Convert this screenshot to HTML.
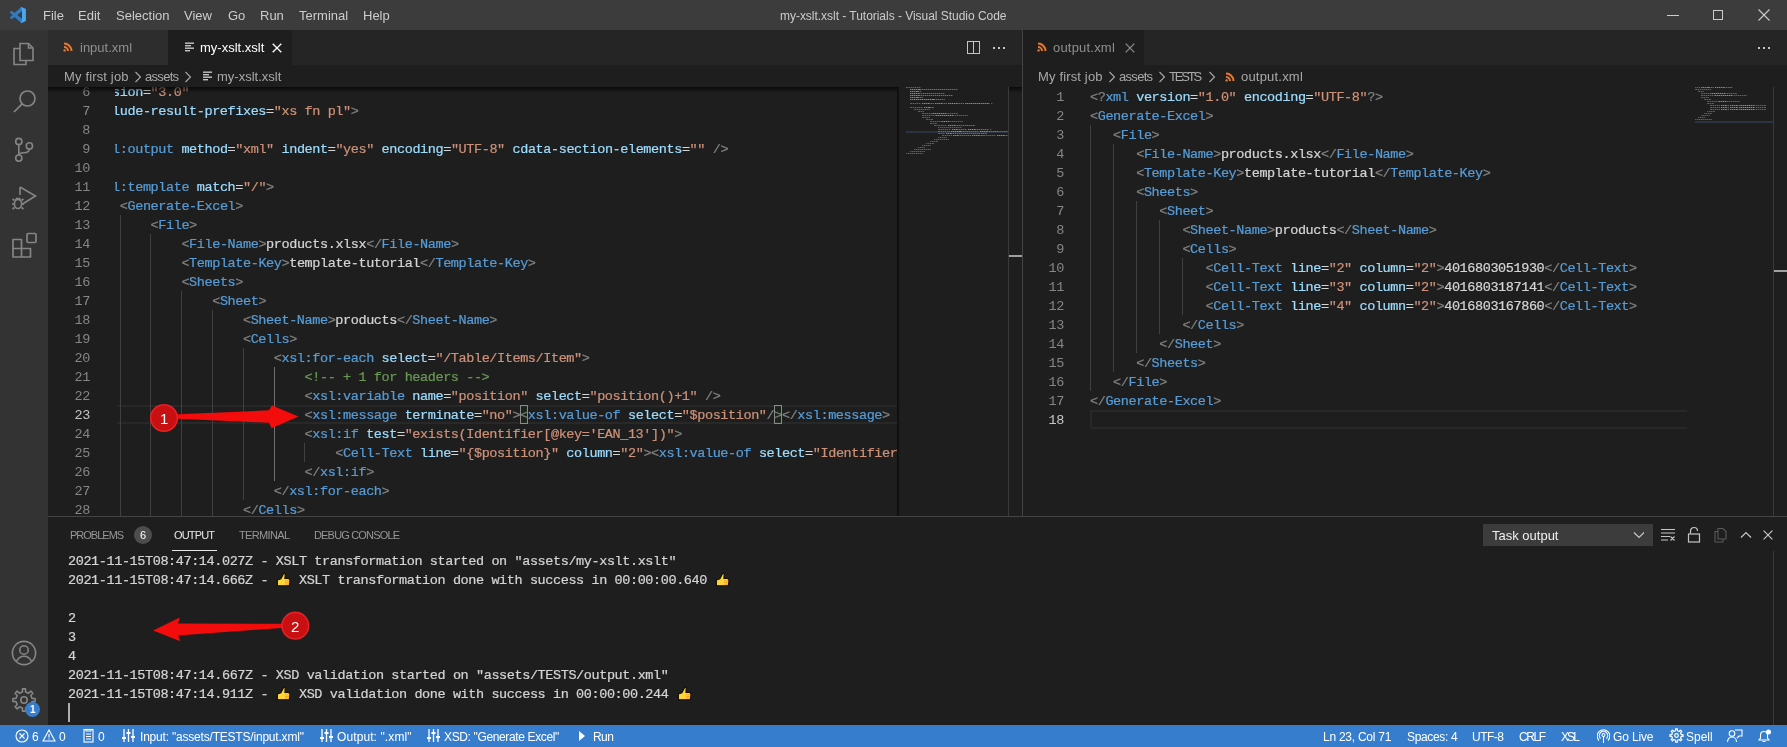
<!DOCTYPE html><html><head><meta charset="utf-8"><style>
*{margin:0;padding:0;box-sizing:border-box}
html,body{width:1787px;height:747px;overflow:hidden;background:#1e1e1e}
body{position:relative;font-family:"Liberation Sans",sans-serif;font-size:13px;color:#cccccc}
.a{position:absolute}
.ui{position:absolute;white-space:pre;font-family:"Liberation Sans",sans-serif;line-height:1}
.cl{position:absolute;height:19px;line-height:19px;white-space:pre;font-family:"Liberation Mono",monospace;font-size:13.5px;letter-spacing:-0.403px}
.ln{position:absolute;height:19px;line-height:19px;text-align:right;font-family:"Liberation Mono",monospace;font-size:13.5px;letter-spacing:-0.403px;color:#858585}
.ln.act{color:#c6c6c6}
.g{position:absolute;width:1px;background:#404040}
.ga{background:#707070}
.cl,.ln,.ol,.ui{will-change:transform}
.cl,.ol{-webkit-text-stroke:0.22px}
.ol{position:absolute;left:68px;height:19px;line-height:19px;white-space:pre;font-family:"Liberation Mono",monospace;font-size:13.5px;letter-spacing:-0.403px;color:#d4d4d4}
</style></head><body>
<div class="a" style="left:0;top:0;width:1787px;height:30px;background:#3c3c3c"></div>
<svg class="a" style="left:10px;top:7px" width="16" height="16" viewBox="0 0 100 100"><path d="M68.3 97.9 28.9 62 11.8 75c-1.6 1.2-3.8 1.1-5.3-.2l-5.5-5c-1.8-1.7-1.8-4.5 0-6.2L15.8 50 1 36.5c-1.8-1.7-1.8-4.5 0-6.2l5.5-5c1.5-1.3 3.7-1.4 5.3-.2L28.9 38 68.3 2.1 75 27.3 45.1 50 75 72.7z" fill="#2d7cc4"/><path d="M68.3 2.1c1.9-1.9 4.7-2.4 7.1-1.2L96 10.8c2.1 1 3.5 3.2 3.5 5.6v67.2c0 2.4-1.3 4.6-3.5 5.6L75.4 99.1c-2.4 1.2-5.2.7-7.1-1.2L75 72.7V27.3z" fill="#4aa6ef"/></svg>
<div class="ui" style="left:43px;top:9px;font-size:13px;color:#cccccc">File</div>
<div class="ui" style="left:78px;top:9px;font-size:13px;color:#cccccc">Edit</div>
<div class="ui" style="left:116px;top:9px;font-size:13px;color:#cccccc">Selection</div>
<div class="ui" style="left:184px;top:9px;font-size:13px;color:#cccccc">View</div>
<div class="ui" style="left:228px;top:9px;font-size:13px;color:#cccccc">Go</div>
<div class="ui" style="left:260px;top:9px;font-size:13px;color:#cccccc">Run</div>
<div class="ui" style="left:299px;top:9px;font-size:13px;color:#cccccc">Terminal</div>
<div class="ui" style="left:363px;top:9px;font-size:13px;color:#cccccc">Help</div>
<div class="ui" style="left:780px;top:10px;font-size:12px;color:#cccccc;letter-spacing:-0.03px">my-xslt.xslt - Tutorials - Visual Studio Code</div>
<div class="a" style="left:1667px;top:15px;width:12px;height:1px;background:#cccccc"></div>
<div class="a" style="left:1713px;top:10px;width:10px;height:10px;border:1px solid #cccccc"></div>
<svg class="a" style="left:1758px;top:9px" width="12" height="12" viewBox="0 0 12 12"><path d="M0.5 0.5 11.5 11.5M11.5 0.5 0.5 11.5" stroke="#cccccc" stroke-width="1.1"/></svg>
<div class="a" style="left:0;top:30px;width:48px;height:695px;background:#333333"></div>
<svg class="a" style="left:12px;top:41px" width="24" height="26" viewBox="0 0 24 26" fill="none" stroke="#858585" stroke-width="1.6">
<path d="M8 2.5h8.5l4.5 4.5v12.5H8z"/><path d="M16.5 2.5v4.5H21"/><path d="M8 7.5H2v16h12v-4"/></svg>
<svg class="a" style="left:12px;top:88px" width="26" height="26" viewBox="0 0 26 26" fill="none" stroke="#858585" stroke-width="1.7"><circle cx="15.5" cy="10.5" r="7.5"/><path d="M10.2 15.8 2 24"/></svg>
<svg class="a" style="left:12px;top:135px" width="24" height="28" viewBox="0 0 24 28" fill="none" stroke="#858585" stroke-width="1.6"><circle cx="6.8" cy="6.5" r="3.1"/><circle cx="6.8" cy="23.1" r="3.1"/><circle cx="17.4" cy="10.9" r="3.1"/><path d="M6.8 9.6v10.4M17.4 14c0 3-2.5 3.6-5.5 3.8-3 .2-5.1.6-5.1 2.2"/></svg>
<svg class="a" style="left:10px;top:185px" width="28" height="26" viewBox="0 0 28 26" fill="none" stroke="#858585" stroke-width="1.6"><path d="M10 2 25.5 11 12.5 19"/><path d="M10 2v8"/><ellipse cx="8" cy="19" rx="3.6" ry="4.5"/><path d="M4.5 15.5 2.5 14M11.5 15.5l2-1.5M4.4 19H2M11.6 19H14M4.5 22.5l-2 1.5M11.5 22.5l2 1.5M5.5 15.5l1-2h3l1 2"/></svg>
<svg class="a" style="left:11px;top:232px" width="26" height="26" viewBox="0 0 26 26" fill="none" stroke="#858585" stroke-width="1.7" stroke-linejoin="round"><path d="M2 7.5h8.5v9h9v8.5H2z"/><path d="M2 16.5h8.5V25"/><rect x="16" y="1.5" width="9" height="9" rx="1.2"/></svg>
<svg class="a" style="left:11px;top:640px" width="26" height="26" viewBox="0 0 26 26" fill="none" stroke="#858585" stroke-width="1.6"><circle cx="13" cy="13" r="11.6"/><circle cx="13" cy="10" r="4.3"/><path d="M5.5 21.5c1.5-3.5 4.3-5.2 7.5-5.2s6 1.7 7.5 5.2"/></svg>
<svg class="a" style="left:11px;top:687px" width="26" height="26" viewBox="0 0 26 26" fill="none" stroke="#858585" stroke-width="1.6" stroke-linejoin="round"><path d="M21.04 11.40 L24.09 11.47 L24.09 14.53 L21.04 14.60 L19.82 17.56 L21.93 19.76 L19.76 21.93 L17.56 19.82 L14.60 21.04 L14.53 24.09 L11.47 24.09 L11.40 21.04 L8.44 19.82 L6.24 21.93 L4.07 19.76 L6.18 17.56 L4.96 14.60 L1.91 14.53 L1.91 11.47 L4.96 11.40 L6.18 8.44 L4.07 6.24 L6.24 4.07 L8.44 6.18 L11.40 4.96 L11.47 1.91 L14.53 1.91 L14.60 4.96 L17.56 6.18 L19.76 4.07 L21.93 6.24 L19.82 8.44Z"/><circle cx="13" cy="13" r="3.2"/></svg>
<div class="a" style="left:25px;top:702px;width:15px;height:15px;border-radius:50%;background:#367ecd"></div>
<div class="ui" style="left:29.5px;top:704.5px;font-size:10px;color:#fff;font-weight:bold">1</div>
<div class="a" style="left:48px;top:30px;width:974px;height:35px;background:#252526"></div>
<div class="a" style="left:48px;top:30px;width:120px;height:35px;background:#2d2d2d"></div>
<div class="a" style="left:168px;top:30px;width:124px;height:35px;background:#1e1e1e"></div>
<svg class="a" style="left:63px;top:42px" width="10" height="10" viewBox="0 0 10 10" fill="none" stroke="#e37933" stroke-width="2"><path d="M1 1.5a7.5 7.5 0 0 1 7.5 7.5"/><path d="M1 5a4 4 0 0 1 4 4"/><circle cx="1.6" cy="8.4" r="1.2" fill="#e37933" stroke="none"/></svg>
<div class="ui" style="left:80px;top:41px;font-size:13px;color:#8f8f8f">input.xml</div>
<svg class="a" style="left:185px;top:42px" width="10" height="10" viewBox="0 0 10 10" fill="#c5c5c5"><rect x="0" y="0.5" width="9" height="1.4"/><rect x="0" y="3" width="6" height="1.4"/><rect x="0" y="5.5" width="9" height="1.4"/><rect x="0" y="8" width="5" height="1.4"/></svg>
<div class="ui" style="left:200px;top:41px;font-size:13px;color:#ffffff">my-xslt.xslt</div>
<svg class="a" style="left:272px;top:43px" width="10" height="10" viewBox="0 0 10 10"><path d="M0.7 0.7 9.3 9.3M9.3 0.7 0.7 9.3" stroke="#ffffff" stroke-width="1.3"/></svg>
<div class="a" style="left:967px;top:41px;width:13px;height:13px;border:1px solid #c5c5c5"></div><div class="a" style="left:973px;top:41px;width:1px;height:13px;background:#c5c5c5"></div>
<div class="a" style="left:993px;top:47px;width:2px;height:2px;background:#c5c5c5"></div>
<div class="a" style="left:998px;top:47px;width:2px;height:2px;background:#c5c5c5"></div>
<div class="a" style="left:1003px;top:47px;width:2px;height:2px;background:#c5c5c5"></div>
<div class="a" style="left:48px;top:65px;width:974px;height:22px;background:#1e1e1e"></div>
<div class="ui" style="left:64px;top:70px;font-size:13px;color:#a9a9a9;letter-spacing:0.15px">My first job</div>
<svg class="a" style="left:134px;top:71px" width="8" height="12" viewBox="0 0 8 12"><path d="M1.5 1 6.5 6 1.5 11" fill="none" stroke="#a9a9a9" stroke-width="1.1"/></svg>
<div class="ui" style="left:145px;top:70px;font-size:13px;color:#a9a9a9;letter-spacing:-0.7px">assets</div>
<svg class="a" style="left:184px;top:71px" width="8" height="12" viewBox="0 0 8 12"><path d="M1.5 1 6.5 6 1.5 11" fill="none" stroke="#a9a9a9" stroke-width="1.1"/></svg>
<svg class="a" style="left:203px;top:71px" width="10" height="10" viewBox="0 0 10 10" fill="#c5c5c5"><rect x="0" y="0.5" width="9" height="1.4"/><rect x="0" y="3" width="6" height="1.4"/><rect x="0" y="5.5" width="9" height="1.4"/><rect x="0" y="8" width="5" height="1.4"/></svg>
<div class="ui" style="left:217px;top:70px;font-size:13px;color:#a9a9a9">my-xslt.xslt</div>
<div class="a" style="left:48px;top:87px;width:974px;height:429px;background:#1e1e1e"></div>
<div class="ln" style="top:83px;left:48px;width:42px">6</div><div class="ln" style="top:102px;left:48px;width:42px">7</div><div class="ln" style="top:121px;left:48px;width:42px">8</div><div class="ln" style="top:140px;left:48px;width:42px">9</div><div class="ln" style="top:159px;left:48px;width:42px">10</div><div class="ln" style="top:178px;left:48px;width:42px">11</div><div class="ln" style="top:197px;left:48px;width:42px">12</div><div class="ln" style="top:216px;left:48px;width:42px">13</div><div class="ln" style="top:235px;left:48px;width:42px">14</div><div class="ln" style="top:254px;left:48px;width:42px">15</div><div class="ln" style="top:273px;left:48px;width:42px">16</div><div class="ln" style="top:292px;left:48px;width:42px">17</div><div class="ln" style="top:311px;left:48px;width:42px">18</div><div class="ln" style="top:330px;left:48px;width:42px">19</div><div class="ln" style="top:349px;left:48px;width:42px">20</div><div class="ln" style="top:368px;left:48px;width:42px">21</div><div class="ln" style="top:387px;left:48px;width:42px">22</div><div class="ln act" style="top:406px;left:48px;width:42px">23</div><div class="ln" style="top:425px;left:48px;width:42px">24</div><div class="ln" style="top:444px;left:48px;width:42px">25</div><div class="ln" style="top:463px;left:48px;width:42px">26</div><div class="ln" style="top:482px;left:48px;width:42px">27</div><div class="ln" style="top:501px;left:48px;width:42px">28</div><div class="ln" style="top:520px;left:48px;width:42px">29</div>
<div class="a" style="left:117px;top:405px;width:780px;height:19px;border-top:2px solid #282828;border-bottom:2px solid #282828"></div>
<div class="a" style="left:115px;top:87px;width:782px;height:429px;overflow:hidden"><div class="g" style="left:5px;top:128px;height:323px"></div><div class="g" style="left:35px;top:147px;height:304px"></div><div class="g" style="left:66px;top:204px;height:247px"></div><div class="g" style="left:97px;top:223px;height:228px"></div><div class="g" style="left:128px;top:261px;height:152px"></div><div class="g ga" style="left:159px;top:280px;height:114px"></div><div class="g" style="left:189px;top:356px;height:19px"></div><div class="cl" style="top:-4px;left:-26.50px"><span style="color:#9cdcfe">version</span><span style="color:#d4d4d4">=</span><span style="color:#ce9178">&quot;3.0&quot;</span></div><div class="cl" style="top:15px;left:-26.50px"><span style="color:#9cdcfe">exclude-result-prefixes</span><span style="color:#d4d4d4">=</span><span style="color:#ce9178">&quot;xs fn pl&quot;</span><span style="color:#808080">&gt;</span></div><div class="cl" style="top:34px;left:-26.50px"></div><div class="cl" style="top:53px;left:-26.50px"><span style="color:#808080">&lt;</span><span style="color:#569cd6">xsl:output</span><span style="color:#d4d4d4"> </span><span style="color:#9cdcfe">method</span><span style="color:#d4d4d4">=</span><span style="color:#ce9178">&quot;xml&quot;</span><span style="color:#d4d4d4"> </span><span style="color:#9cdcfe">indent</span><span style="color:#d4d4d4">=</span><span style="color:#ce9178">&quot;yes&quot;</span><span style="color:#d4d4d4"> </span><span style="color:#9cdcfe">encoding</span><span style="color:#d4d4d4">=</span><span style="color:#ce9178">&quot;UTF-8&quot;</span><span style="color:#d4d4d4"> </span><span style="color:#9cdcfe">cdata-section-elements</span><span style="color:#d4d4d4">=</span><span style="color:#ce9178">&quot;&quot;</span><span style="color:#d4d4d4"> </span><span style="color:#808080">/&gt;</span></div><div class="cl" style="top:72px;left:-26.50px"></div><div class="cl" style="top:91px;left:-26.50px"><span style="color:#808080">&lt;</span><span style="color:#569cd6">xsl:template</span><span style="color:#d4d4d4"> </span><span style="color:#9cdcfe">match</span><span style="color:#d4d4d4">=</span><span style="color:#ce9178">&quot;/&quot;</span><span style="color:#808080">&gt;</span></div><div class="cl" style="top:110px;left:-26.50px"><span style="color:#d4d4d4">    </span><span style="color:#808080">&lt;</span><span style="color:#569cd6">Generate-Excel</span><span style="color:#808080">&gt;</span></div><div class="cl" style="top:129px;left:-26.50px"><span style="color:#d4d4d4">        </span><span style="color:#808080">&lt;</span><span style="color:#569cd6">File</span><span style="color:#808080">&gt;</span></div><div class="cl" style="top:148px;left:-26.50px"><span style="color:#d4d4d4">            </span><span style="color:#808080">&lt;</span><span style="color:#569cd6">File-Name</span><span style="color:#808080">&gt;</span><span style="color:#d4d4d4">products.xlsx</span><span style="color:#808080">&lt;/</span><span style="color:#569cd6">File-Name</span><span style="color:#808080">&gt;</span></div><div class="cl" style="top:167px;left:-26.50px"><span style="color:#d4d4d4">            </span><span style="color:#808080">&lt;</span><span style="color:#569cd6">Template-Key</span><span style="color:#808080">&gt;</span><span style="color:#d4d4d4">template-tutorial</span><span style="color:#808080">&lt;/</span><span style="color:#569cd6">Template-Key</span><span style="color:#808080">&gt;</span></div><div class="cl" style="top:186px;left:-26.50px"><span style="color:#d4d4d4">            </span><span style="color:#808080">&lt;</span><span style="color:#569cd6">Sheets</span><span style="color:#808080">&gt;</span></div><div class="cl" style="top:205px;left:-26.50px"><span style="color:#d4d4d4">                </span><span style="color:#808080">&lt;</span><span style="color:#569cd6">Sheet</span><span style="color:#808080">&gt;</span></div><div class="cl" style="top:224px;left:-26.50px"><span style="color:#d4d4d4">                    </span><span style="color:#808080">&lt;</span><span style="color:#569cd6">Sheet-Name</span><span style="color:#808080">&gt;</span><span style="color:#d4d4d4">products</span><span style="color:#808080">&lt;/</span><span style="color:#569cd6">Sheet-Name</span><span style="color:#808080">&gt;</span></div><div class="cl" style="top:243px;left:-26.50px"><span style="color:#d4d4d4">                    </span><span style="color:#808080">&lt;</span><span style="color:#569cd6">Cells</span><span style="color:#808080">&gt;</span></div><div class="cl" style="top:262px;left:-26.50px"><span style="color:#d4d4d4">                        </span><span style="color:#808080">&lt;</span><span style="color:#569cd6">xsl:for-each</span><span style="color:#d4d4d4"> </span><span style="color:#9cdcfe">select</span><span style="color:#d4d4d4">=</span><span style="color:#ce9178">&quot;/Table/Items/Item&quot;</span><span style="color:#808080">&gt;</span></div><div class="cl" style="top:281px;left:-26.50px"><span style="color:#d4d4d4">                            </span><span style="color:#6a9955">&lt;!-- + 1 for headers --&gt;</span></div><div class="cl" style="top:300px;left:-26.50px"><span style="color:#d4d4d4">                            </span><span style="color:#808080">&lt;</span><span style="color:#569cd6">xsl:variable</span><span style="color:#d4d4d4"> </span><span style="color:#9cdcfe">name</span><span style="color:#d4d4d4">=</span><span style="color:#ce9178">&quot;position&quot;</span><span style="color:#d4d4d4"> </span><span style="color:#9cdcfe">select</span><span style="color:#d4d4d4">=</span><span style="color:#ce9178">&quot;position()+1&quot;</span><span style="color:#d4d4d4"> </span><span style="color:#808080">/&gt;</span></div><div class="cl" style="top:319px;left:-26.50px"><span style="color:#d4d4d4">                            </span><span style="color:#808080">&lt;</span><span style="color:#569cd6">xsl:message</span><span style="color:#d4d4d4"> </span><span style="color:#9cdcfe">terminate</span><span style="color:#d4d4d4">=</span><span style="color:#ce9178">&quot;no&quot;</span><span style="color:#808080">&gt;</span><span style="color:#808080">&lt;</span><span style="color:#569cd6">xsl:value-of</span><span style="color:#d4d4d4"> </span><span style="color:#9cdcfe">select</span><span style="color:#d4d4d4">=</span><span style="color:#ce9178">&quot;$position&quot;</span><span style="color:#808080">/&gt;</span><span style="color:#808080">&lt;/</span><span style="color:#569cd6">xsl:message</span><span style="color:#808080">&gt;</span></div><div class="cl" style="top:338px;left:-26.50px"><span style="color:#d4d4d4">                            </span><span style="color:#808080">&lt;</span><span style="color:#569cd6">xsl:if</span><span style="color:#d4d4d4"> </span><span style="color:#9cdcfe">test</span><span style="color:#d4d4d4">=</span><span style="color:#ce9178">&quot;exists(Identifier[@key=&#x27;EAN_13&#x27;])&quot;</span><span style="color:#808080">&gt;</span></div><div class="cl" style="top:357px;left:-26.50px"><span style="color:#d4d4d4">                                </span><span style="color:#808080">&lt;</span><span style="color:#569cd6">Cell-Text</span><span style="color:#d4d4d4"> </span><span style="color:#9cdcfe">line</span><span style="color:#d4d4d4">=</span><span style="color:#ce9178">&quot;{$position}&quot;</span><span style="color:#d4d4d4"> </span><span style="color:#9cdcfe">column</span><span style="color:#d4d4d4">=</span><span style="color:#ce9178">&quot;2&quot;</span><span style="color:#808080">&gt;</span><span style="color:#808080">&lt;</span><span style="color:#569cd6">xsl:value-of</span><span style="color:#d4d4d4"> </span><span style="color:#9cdcfe">select</span><span style="color:#d4d4d4">=</span><span style="color:#ce9178">&quot;Identifier[@key=&#x27;EAN_13&#x27;]&quot;</span><span style="color:#808080">/&gt;</span><span style="color:#808080">&lt;/</span><span style="color:#569cd6">Cell-Text</span><span style="color:#808080">&gt;</span></div><div class="cl" style="top:376px;left:-26.50px"><span style="color:#d4d4d4">                            </span><span style="color:#808080">&lt;/</span><span style="color:#569cd6">xsl:if</span><span style="color:#808080">&gt;</span></div><div class="cl" style="top:395px;left:-26.50px"><span style="color:#d4d4d4">                        </span><span style="color:#808080">&lt;/</span><span style="color:#569cd6">xsl:for-each</span><span style="color:#808080">&gt;</span></div><div class="cl" style="top:414px;left:-26.50px"><span style="color:#d4d4d4">                    </span><span style="color:#808080">&lt;/</span><span style="color:#569cd6">Cells</span><span style="color:#808080">&gt;</span></div><div class="cl" style="top:433px;left:-26.50px"><span style="color:#d4d4d4">                </span><span style="color:#808080">&lt;/</span><span style="color:#569cd6">Sheet</span><span style="color:#808080">&gt;</span></div>
<div class="a" style="left:405px;top:318px;width:8px;height:19px;border:1px solid #8a8a8a;background:rgba(0,100,0,.1)"></div>
<div class="a" style="left:659px;top:318px;width:8px;height:19px;border:1px solid #8a8a8a;background:rgba(0,100,0,.1)"></div>
</div>
<div class="a" style="left:48px;top:87px;width:974px;height:6px;background:linear-gradient(#000000aa,#00000000)"></div>
<div class="a" style="left:897px;top:87px;width:111px;height:429px;overflow:hidden;background:#1e1e1e">
<div style="position:absolute;left:9px;top:0px;width:1px;height:2px;background:linear-gradient(#808080 0 1px,transparent 1px);opacity:.6;-webkit-mask-image:repeating-linear-gradient(90deg,#000 0 1px,rgba(0,0,0,.45) 1px 2px)"></div><div style="position:absolute;left:10px;top:0px;width:14px;height:2px;background:linear-gradient(#569cd6 0 1px,transparent 1px);opacity:.6;-webkit-mask-image:repeating-linear-gradient(90deg,#000 0 1px,rgba(0,0,0,.45) 1px 2px)"></div><div style="position:absolute;left:13px;top:2px;width:9px;height:2px;background:linear-gradient(#9cdcfe 0 1px,transparent 1px);opacity:.6;-webkit-mask-image:repeating-linear-gradient(90deg,#000 0 1px,rgba(0,0,0,.45) 1px 2px)"></div><div style="position:absolute;left:22px;top:2px;width:1px;height:2px;background:linear-gradient(#d4d4d4 0 1px,transparent 1px);opacity:.6;-webkit-mask-image:repeating-linear-gradient(90deg,#000 0 1px,rgba(0,0,0,.45) 1px 2px)"></div><div style="position:absolute;left:23px;top:2px;width:38px;height:2px;background:linear-gradient(#ce9178 0 1px,transparent 1px);opacity:.6;-webkit-mask-image:repeating-linear-gradient(90deg,#000 0 1px,rgba(0,0,0,.45) 1px 2px)"></div><div style="position:absolute;left:13px;top:4px;width:7px;height:2px;background:linear-gradient(#9cdcfe 0 1px,transparent 1px);opacity:.6;-webkit-mask-image:repeating-linear-gradient(90deg,#000 0 1px,rgba(0,0,0,.45) 1px 2px)"></div><div style="position:absolute;left:20px;top:4px;width:1px;height:2px;background:linear-gradient(#d4d4d4 0 1px,transparent 1px);opacity:.6;-webkit-mask-image:repeating-linear-gradient(90deg,#000 0 1px,rgba(0,0,0,.45) 1px 2px)"></div><div style="position:absolute;left:21px;top:4px;width:3px;height:2px;background:linear-gradient(#ce9178 0 1px,transparent 1px);opacity:.6;-webkit-mask-image:repeating-linear-gradient(90deg,#000 0 1px,rgba(0,0,0,.45) 1px 2px)"></div><div style="position:absolute;left:13px;top:6px;width:8px;height:2px;background:linear-gradient(#9cdcfe 0 1px,transparent 1px);opacity:.6;-webkit-mask-image:repeating-linear-gradient(90deg,#000 0 1px,rgba(0,0,0,.45) 1px 2px)"></div><div style="position:absolute;left:21px;top:6px;width:1px;height:2px;background:linear-gradient(#d4d4d4 0 1px,transparent 1px);opacity:.6;-webkit-mask-image:repeating-linear-gradient(90deg,#000 0 1px,rgba(0,0,0,.45) 1px 2px)"></div><div style="position:absolute;left:22px;top:6px;width:26px;height:2px;background:linear-gradient(#ce9178 0 1px,transparent 1px);opacity:.6;-webkit-mask-image:repeating-linear-gradient(90deg,#000 0 1px,rgba(0,0,0,.45) 1px 2px)"></div><div style="position:absolute;left:13px;top:8px;width:8px;height:2px;background:linear-gradient(#9cdcfe 0 1px,transparent 1px);opacity:.6;-webkit-mask-image:repeating-linear-gradient(90deg,#000 0 1px,rgba(0,0,0,.45) 1px 2px)"></div><div style="position:absolute;left:21px;top:8px;width:1px;height:2px;background:linear-gradient(#d4d4d4 0 1px,transparent 1px);opacity:.6;-webkit-mask-image:repeating-linear-gradient(90deg,#000 0 1px,rgba(0,0,0,.45) 1px 2px)"></div><div style="position:absolute;left:22px;top:8px;width:34px;height:2px;background:linear-gradient(#ce9178 0 1px,transparent 1px);opacity:.6;-webkit-mask-image:repeating-linear-gradient(90deg,#000 0 1px,rgba(0,0,0,.45) 1px 2px)"></div><div style="position:absolute;left:13px;top:10px;width:7px;height:2px;background:linear-gradient(#9cdcfe 0 1px,transparent 1px);opacity:.6;-webkit-mask-image:repeating-linear-gradient(90deg,#000 0 1px,rgba(0,0,0,.45) 1px 2px)"></div><div style="position:absolute;left:20px;top:10px;width:1px;height:2px;background:linear-gradient(#d4d4d4 0 1px,transparent 1px);opacity:.6;-webkit-mask-image:repeating-linear-gradient(90deg,#000 0 1px,rgba(0,0,0,.45) 1px 2px)"></div><div style="position:absolute;left:21px;top:10px;width:5px;height:2px;background:linear-gradient(#ce9178 0 1px,transparent 1px);opacity:.6;-webkit-mask-image:repeating-linear-gradient(90deg,#000 0 1px,rgba(0,0,0,.45) 1px 2px)"></div><div style="position:absolute;left:13px;top:12px;width:23px;height:2px;background:linear-gradient(#9cdcfe 0 1px,transparent 1px);opacity:.6;-webkit-mask-image:repeating-linear-gradient(90deg,#000 0 1px,rgba(0,0,0,.45) 1px 2px)"></div><div style="position:absolute;left:36px;top:12px;width:1px;height:2px;background:linear-gradient(#d4d4d4 0 1px,transparent 1px);opacity:.6;-webkit-mask-image:repeating-linear-gradient(90deg,#000 0 1px,rgba(0,0,0,.45) 1px 2px)"></div><div style="position:absolute;left:37px;top:12px;width:10px;height:2px;background:linear-gradient(#ce9178 0 1px,transparent 1px);opacity:.6;-webkit-mask-image:repeating-linear-gradient(90deg,#000 0 1px,rgba(0,0,0,.45) 1px 2px)"></div><div style="position:absolute;left:47px;top:12px;width:1px;height:2px;background:linear-gradient(#808080 0 1px,transparent 1px);opacity:.6;-webkit-mask-image:repeating-linear-gradient(90deg,#000 0 1px,rgba(0,0,0,.45) 1px 2px)"></div><div style="position:absolute;left:13px;top:16px;width:1px;height:2px;background:linear-gradient(#808080 0 1px,transparent 1px);opacity:.6;-webkit-mask-image:repeating-linear-gradient(90deg,#000 0 1px,rgba(0,0,0,.45) 1px 2px)"></div><div style="position:absolute;left:14px;top:16px;width:10px;height:2px;background:linear-gradient(#569cd6 0 1px,transparent 1px);opacity:.6;-webkit-mask-image:repeating-linear-gradient(90deg,#000 0 1px,rgba(0,0,0,.45) 1px 2px)"></div><div style="position:absolute;left:25px;top:16px;width:6px;height:2px;background:linear-gradient(#9cdcfe 0 1px,transparent 1px);opacity:.6;-webkit-mask-image:repeating-linear-gradient(90deg,#000 0 1px,rgba(0,0,0,.45) 1px 2px)"></div><div style="position:absolute;left:31px;top:16px;width:1px;height:2px;background:linear-gradient(#d4d4d4 0 1px,transparent 1px);opacity:.6;-webkit-mask-image:repeating-linear-gradient(90deg,#000 0 1px,rgba(0,0,0,.45) 1px 2px)"></div><div style="position:absolute;left:32px;top:16px;width:5px;height:2px;background:linear-gradient(#ce9178 0 1px,transparent 1px);opacity:.6;-webkit-mask-image:repeating-linear-gradient(90deg,#000 0 1px,rgba(0,0,0,.45) 1px 2px)"></div><div style="position:absolute;left:38px;top:16px;width:6px;height:2px;background:linear-gradient(#9cdcfe 0 1px,transparent 1px);opacity:.6;-webkit-mask-image:repeating-linear-gradient(90deg,#000 0 1px,rgba(0,0,0,.45) 1px 2px)"></div><div style="position:absolute;left:44px;top:16px;width:1px;height:2px;background:linear-gradient(#d4d4d4 0 1px,transparent 1px);opacity:.6;-webkit-mask-image:repeating-linear-gradient(90deg,#000 0 1px,rgba(0,0,0,.45) 1px 2px)"></div><div style="position:absolute;left:45px;top:16px;width:5px;height:2px;background:linear-gradient(#ce9178 0 1px,transparent 1px);opacity:.6;-webkit-mask-image:repeating-linear-gradient(90deg,#000 0 1px,rgba(0,0,0,.45) 1px 2px)"></div><div style="position:absolute;left:51px;top:16px;width:8px;height:2px;background:linear-gradient(#9cdcfe 0 1px,transparent 1px);opacity:.6;-webkit-mask-image:repeating-linear-gradient(90deg,#000 0 1px,rgba(0,0,0,.45) 1px 2px)"></div><div style="position:absolute;left:59px;top:16px;width:1px;height:2px;background:linear-gradient(#d4d4d4 0 1px,transparent 1px);opacity:.6;-webkit-mask-image:repeating-linear-gradient(90deg,#000 0 1px,rgba(0,0,0,.45) 1px 2px)"></div><div style="position:absolute;left:60px;top:16px;width:7px;height:2px;background:linear-gradient(#ce9178 0 1px,transparent 1px);opacity:.6;-webkit-mask-image:repeating-linear-gradient(90deg,#000 0 1px,rgba(0,0,0,.45) 1px 2px)"></div><div style="position:absolute;left:68px;top:16px;width:22px;height:2px;background:linear-gradient(#9cdcfe 0 1px,transparent 1px);opacity:.6;-webkit-mask-image:repeating-linear-gradient(90deg,#000 0 1px,rgba(0,0,0,.45) 1px 2px)"></div><div style="position:absolute;left:90px;top:16px;width:1px;height:2px;background:linear-gradient(#d4d4d4 0 1px,transparent 1px);opacity:.6;-webkit-mask-image:repeating-linear-gradient(90deg,#000 0 1px,rgba(0,0,0,.45) 1px 2px)"></div><div style="position:absolute;left:91px;top:16px;width:2px;height:2px;background:linear-gradient(#ce9178 0 1px,transparent 1px);opacity:.6;-webkit-mask-image:repeating-linear-gradient(90deg,#000 0 1px,rgba(0,0,0,.45) 1px 2px)"></div><div style="position:absolute;left:94px;top:16px;width:2px;height:2px;background:linear-gradient(#808080 0 1px,transparent 1px);opacity:.6;-webkit-mask-image:repeating-linear-gradient(90deg,#000 0 1px,rgba(0,0,0,.45) 1px 2px)"></div><div style="position:absolute;left:13px;top:20px;width:1px;height:2px;background:linear-gradient(#808080 0 1px,transparent 1px);opacity:.6;-webkit-mask-image:repeating-linear-gradient(90deg,#000 0 1px,rgba(0,0,0,.45) 1px 2px)"></div><div style="position:absolute;left:14px;top:20px;width:12px;height:2px;background:linear-gradient(#569cd6 0 1px,transparent 1px);opacity:.6;-webkit-mask-image:repeating-linear-gradient(90deg,#000 0 1px,rgba(0,0,0,.45) 1px 2px)"></div><div style="position:absolute;left:27px;top:20px;width:5px;height:2px;background:linear-gradient(#9cdcfe 0 1px,transparent 1px);opacity:.6;-webkit-mask-image:repeating-linear-gradient(90deg,#000 0 1px,rgba(0,0,0,.45) 1px 2px)"></div><div style="position:absolute;left:32px;top:20px;width:1px;height:2px;background:linear-gradient(#d4d4d4 0 1px,transparent 1px);opacity:.6;-webkit-mask-image:repeating-linear-gradient(90deg,#000 0 1px,rgba(0,0,0,.45) 1px 2px)"></div><div style="position:absolute;left:33px;top:20px;width:3px;height:2px;background:linear-gradient(#ce9178 0 1px,transparent 1px);opacity:.6;-webkit-mask-image:repeating-linear-gradient(90deg,#000 0 1px,rgba(0,0,0,.45) 1px 2px)"></div><div style="position:absolute;left:36px;top:20px;width:1px;height:2px;background:linear-gradient(#808080 0 1px,transparent 1px);opacity:.6;-webkit-mask-image:repeating-linear-gradient(90deg,#000 0 1px,rgba(0,0,0,.45) 1px 2px)"></div><div style="position:absolute;left:17px;top:22px;width:1px;height:2px;background:linear-gradient(#808080 0 1px,transparent 1px);opacity:.6;-webkit-mask-image:repeating-linear-gradient(90deg,#000 0 1px,rgba(0,0,0,.45) 1px 2px)"></div><div style="position:absolute;left:18px;top:22px;width:14px;height:2px;background:linear-gradient(#569cd6 0 1px,transparent 1px);opacity:.6;-webkit-mask-image:repeating-linear-gradient(90deg,#000 0 1px,rgba(0,0,0,.45) 1px 2px)"></div><div style="position:absolute;left:32px;top:22px;width:1px;height:2px;background:linear-gradient(#808080 0 1px,transparent 1px);opacity:.6;-webkit-mask-image:repeating-linear-gradient(90deg,#000 0 1px,rgba(0,0,0,.45) 1px 2px)"></div><div style="position:absolute;left:21px;top:24px;width:1px;height:2px;background:linear-gradient(#808080 0 1px,transparent 1px);opacity:.6;-webkit-mask-image:repeating-linear-gradient(90deg,#000 0 1px,rgba(0,0,0,.45) 1px 2px)"></div><div style="position:absolute;left:22px;top:24px;width:4px;height:2px;background:linear-gradient(#569cd6 0 1px,transparent 1px);opacity:.6;-webkit-mask-image:repeating-linear-gradient(90deg,#000 0 1px,rgba(0,0,0,.45) 1px 2px)"></div><div style="position:absolute;left:26px;top:24px;width:1px;height:2px;background:linear-gradient(#808080 0 1px,transparent 1px);opacity:.6;-webkit-mask-image:repeating-linear-gradient(90deg,#000 0 1px,rgba(0,0,0,.45) 1px 2px)"></div><div style="position:absolute;left:25px;top:26px;width:1px;height:2px;background:linear-gradient(#808080 0 1px,transparent 1px);opacity:.6;-webkit-mask-image:repeating-linear-gradient(90deg,#000 0 1px,rgba(0,0,0,.45) 1px 2px)"></div><div style="position:absolute;left:26px;top:26px;width:9px;height:2px;background:linear-gradient(#569cd6 0 1px,transparent 1px);opacity:.6;-webkit-mask-image:repeating-linear-gradient(90deg,#000 0 1px,rgba(0,0,0,.45) 1px 2px)"></div><div style="position:absolute;left:35px;top:26px;width:1px;height:2px;background:linear-gradient(#808080 0 1px,transparent 1px);opacity:.6;-webkit-mask-image:repeating-linear-gradient(90deg,#000 0 1px,rgba(0,0,0,.45) 1px 2px)"></div><div style="position:absolute;left:36px;top:26px;width:13px;height:2px;background:linear-gradient(#d4d4d4 0 1px,transparent 1px);opacity:.6;-webkit-mask-image:repeating-linear-gradient(90deg,#000 0 1px,rgba(0,0,0,.45) 1px 2px)"></div><div style="position:absolute;left:49px;top:26px;width:2px;height:2px;background:linear-gradient(#808080 0 1px,transparent 1px);opacity:.6;-webkit-mask-image:repeating-linear-gradient(90deg,#000 0 1px,rgba(0,0,0,.45) 1px 2px)"></div><div style="position:absolute;left:51px;top:26px;width:9px;height:2px;background:linear-gradient(#569cd6 0 1px,transparent 1px);opacity:.6;-webkit-mask-image:repeating-linear-gradient(90deg,#000 0 1px,rgba(0,0,0,.45) 1px 2px)"></div><div style="position:absolute;left:60px;top:26px;width:1px;height:2px;background:linear-gradient(#808080 0 1px,transparent 1px);opacity:.6;-webkit-mask-image:repeating-linear-gradient(90deg,#000 0 1px,rgba(0,0,0,.45) 1px 2px)"></div><div style="position:absolute;left:25px;top:28px;width:1px;height:2px;background:linear-gradient(#808080 0 1px,transparent 1px);opacity:.6;-webkit-mask-image:repeating-linear-gradient(90deg,#000 0 1px,rgba(0,0,0,.45) 1px 2px)"></div><div style="position:absolute;left:26px;top:28px;width:12px;height:2px;background:linear-gradient(#569cd6 0 1px,transparent 1px);opacity:.6;-webkit-mask-image:repeating-linear-gradient(90deg,#000 0 1px,rgba(0,0,0,.45) 1px 2px)"></div><div style="position:absolute;left:38px;top:28px;width:1px;height:2px;background:linear-gradient(#808080 0 1px,transparent 1px);opacity:.6;-webkit-mask-image:repeating-linear-gradient(90deg,#000 0 1px,rgba(0,0,0,.45) 1px 2px)"></div><div style="position:absolute;left:39px;top:28px;width:17px;height:2px;background:linear-gradient(#d4d4d4 0 1px,transparent 1px);opacity:.6;-webkit-mask-image:repeating-linear-gradient(90deg,#000 0 1px,rgba(0,0,0,.45) 1px 2px)"></div><div style="position:absolute;left:56px;top:28px;width:2px;height:2px;background:linear-gradient(#808080 0 1px,transparent 1px);opacity:.6;-webkit-mask-image:repeating-linear-gradient(90deg,#000 0 1px,rgba(0,0,0,.45) 1px 2px)"></div><div style="position:absolute;left:58px;top:28px;width:12px;height:2px;background:linear-gradient(#569cd6 0 1px,transparent 1px);opacity:.6;-webkit-mask-image:repeating-linear-gradient(90deg,#000 0 1px,rgba(0,0,0,.45) 1px 2px)"></div><div style="position:absolute;left:70px;top:28px;width:1px;height:2px;background:linear-gradient(#808080 0 1px,transparent 1px);opacity:.6;-webkit-mask-image:repeating-linear-gradient(90deg,#000 0 1px,rgba(0,0,0,.45) 1px 2px)"></div><div style="position:absolute;left:25px;top:30px;width:1px;height:2px;background:linear-gradient(#808080 0 1px,transparent 1px);opacity:.6;-webkit-mask-image:repeating-linear-gradient(90deg,#000 0 1px,rgba(0,0,0,.45) 1px 2px)"></div><div style="position:absolute;left:26px;top:30px;width:6px;height:2px;background:linear-gradient(#569cd6 0 1px,transparent 1px);opacity:.6;-webkit-mask-image:repeating-linear-gradient(90deg,#000 0 1px,rgba(0,0,0,.45) 1px 2px)"></div><div style="position:absolute;left:32px;top:30px;width:1px;height:2px;background:linear-gradient(#808080 0 1px,transparent 1px);opacity:.6;-webkit-mask-image:repeating-linear-gradient(90deg,#000 0 1px,rgba(0,0,0,.45) 1px 2px)"></div><div style="position:absolute;left:29px;top:32px;width:1px;height:2px;background:linear-gradient(#808080 0 1px,transparent 1px);opacity:.6;-webkit-mask-image:repeating-linear-gradient(90deg,#000 0 1px,rgba(0,0,0,.45) 1px 2px)"></div><div style="position:absolute;left:30px;top:32px;width:5px;height:2px;background:linear-gradient(#569cd6 0 1px,transparent 1px);opacity:.6;-webkit-mask-image:repeating-linear-gradient(90deg,#000 0 1px,rgba(0,0,0,.45) 1px 2px)"></div><div style="position:absolute;left:35px;top:32px;width:1px;height:2px;background:linear-gradient(#808080 0 1px,transparent 1px);opacity:.6;-webkit-mask-image:repeating-linear-gradient(90deg,#000 0 1px,rgba(0,0,0,.45) 1px 2px)"></div><div style="position:absolute;left:33px;top:34px;width:1px;height:2px;background:linear-gradient(#808080 0 1px,transparent 1px);opacity:.6;-webkit-mask-image:repeating-linear-gradient(90deg,#000 0 1px,rgba(0,0,0,.45) 1px 2px)"></div><div style="position:absolute;left:34px;top:34px;width:10px;height:2px;background:linear-gradient(#569cd6 0 1px,transparent 1px);opacity:.6;-webkit-mask-image:repeating-linear-gradient(90deg,#000 0 1px,rgba(0,0,0,.45) 1px 2px)"></div><div style="position:absolute;left:44px;top:34px;width:1px;height:2px;background:linear-gradient(#808080 0 1px,transparent 1px);opacity:.6;-webkit-mask-image:repeating-linear-gradient(90deg,#000 0 1px,rgba(0,0,0,.45) 1px 2px)"></div><div style="position:absolute;left:45px;top:34px;width:8px;height:2px;background:linear-gradient(#d4d4d4 0 1px,transparent 1px);opacity:.6;-webkit-mask-image:repeating-linear-gradient(90deg,#000 0 1px,rgba(0,0,0,.45) 1px 2px)"></div><div style="position:absolute;left:53px;top:34px;width:2px;height:2px;background:linear-gradient(#808080 0 1px,transparent 1px);opacity:.6;-webkit-mask-image:repeating-linear-gradient(90deg,#000 0 1px,rgba(0,0,0,.45) 1px 2px)"></div><div style="position:absolute;left:55px;top:34px;width:10px;height:2px;background:linear-gradient(#569cd6 0 1px,transparent 1px);opacity:.6;-webkit-mask-image:repeating-linear-gradient(90deg,#000 0 1px,rgba(0,0,0,.45) 1px 2px)"></div><div style="position:absolute;left:65px;top:34px;width:1px;height:2px;background:linear-gradient(#808080 0 1px,transparent 1px);opacity:.6;-webkit-mask-image:repeating-linear-gradient(90deg,#000 0 1px,rgba(0,0,0,.45) 1px 2px)"></div><div style="position:absolute;left:33px;top:36px;width:1px;height:2px;background:linear-gradient(#808080 0 1px,transparent 1px);opacity:.6;-webkit-mask-image:repeating-linear-gradient(90deg,#000 0 1px,rgba(0,0,0,.45) 1px 2px)"></div><div style="position:absolute;left:34px;top:36px;width:5px;height:2px;background:linear-gradient(#569cd6 0 1px,transparent 1px);opacity:.6;-webkit-mask-image:repeating-linear-gradient(90deg,#000 0 1px,rgba(0,0,0,.45) 1px 2px)"></div><div style="position:absolute;left:39px;top:36px;width:1px;height:2px;background:linear-gradient(#808080 0 1px,transparent 1px);opacity:.6;-webkit-mask-image:repeating-linear-gradient(90deg,#000 0 1px,rgba(0,0,0,.45) 1px 2px)"></div><div style="position:absolute;left:37px;top:38px;width:1px;height:2px;background:linear-gradient(#808080 0 1px,transparent 1px);opacity:.6;-webkit-mask-image:repeating-linear-gradient(90deg,#000 0 1px,rgba(0,0,0,.45) 1px 2px)"></div><div style="position:absolute;left:38px;top:38px;width:12px;height:2px;background:linear-gradient(#569cd6 0 1px,transparent 1px);opacity:.6;-webkit-mask-image:repeating-linear-gradient(90deg,#000 0 1px,rgba(0,0,0,.45) 1px 2px)"></div><div style="position:absolute;left:51px;top:38px;width:6px;height:2px;background:linear-gradient(#9cdcfe 0 1px,transparent 1px);opacity:.6;-webkit-mask-image:repeating-linear-gradient(90deg,#000 0 1px,rgba(0,0,0,.45) 1px 2px)"></div><div style="position:absolute;left:57px;top:38px;width:1px;height:2px;background:linear-gradient(#d4d4d4 0 1px,transparent 1px);opacity:.6;-webkit-mask-image:repeating-linear-gradient(90deg,#000 0 1px,rgba(0,0,0,.45) 1px 2px)"></div><div style="position:absolute;left:58px;top:38px;width:19px;height:2px;background:linear-gradient(#ce9178 0 1px,transparent 1px);opacity:.6;-webkit-mask-image:repeating-linear-gradient(90deg,#000 0 1px,rgba(0,0,0,.45) 1px 2px)"></div><div style="position:absolute;left:77px;top:38px;width:1px;height:2px;background:linear-gradient(#808080 0 1px,transparent 1px);opacity:.6;-webkit-mask-image:repeating-linear-gradient(90deg,#000 0 1px,rgba(0,0,0,.45) 1px 2px)"></div><div style="position:absolute;left:41px;top:40px;width:24px;height:2px;background:linear-gradient(#6a9955 0 1px,transparent 1px);opacity:.6;-webkit-mask-image:repeating-linear-gradient(90deg,#000 0 1px,rgba(0,0,0,.45) 1px 2px)"></div><div style="position:absolute;left:41px;top:42px;width:1px;height:2px;background:linear-gradient(#808080 0 1px,transparent 1px);opacity:.6;-webkit-mask-image:repeating-linear-gradient(90deg,#000 0 1px,rgba(0,0,0,.45) 1px 2px)"></div><div style="position:absolute;left:42px;top:42px;width:12px;height:2px;background:linear-gradient(#569cd6 0 1px,transparent 1px);opacity:.6;-webkit-mask-image:repeating-linear-gradient(90deg,#000 0 1px,rgba(0,0,0,.45) 1px 2px)"></div><div style="position:absolute;left:55px;top:42px;width:4px;height:2px;background:linear-gradient(#9cdcfe 0 1px,transparent 1px);opacity:.6;-webkit-mask-image:repeating-linear-gradient(90deg,#000 0 1px,rgba(0,0,0,.45) 1px 2px)"></div><div style="position:absolute;left:59px;top:42px;width:1px;height:2px;background:linear-gradient(#d4d4d4 0 1px,transparent 1px);opacity:.6;-webkit-mask-image:repeating-linear-gradient(90deg,#000 0 1px,rgba(0,0,0,.45) 1px 2px)"></div><div style="position:absolute;left:60px;top:42px;width:10px;height:2px;background:linear-gradient(#ce9178 0 1px,transparent 1px);opacity:.6;-webkit-mask-image:repeating-linear-gradient(90deg,#000 0 1px,rgba(0,0,0,.45) 1px 2px)"></div><div style="position:absolute;left:71px;top:42px;width:6px;height:2px;background:linear-gradient(#9cdcfe 0 1px,transparent 1px);opacity:.6;-webkit-mask-image:repeating-linear-gradient(90deg,#000 0 1px,rgba(0,0,0,.45) 1px 2px)"></div><div style="position:absolute;left:77px;top:42px;width:1px;height:2px;background:linear-gradient(#d4d4d4 0 1px,transparent 1px);opacity:.6;-webkit-mask-image:repeating-linear-gradient(90deg,#000 0 1px,rgba(0,0,0,.45) 1px 2px)"></div><div style="position:absolute;left:78px;top:42px;width:14px;height:2px;background:linear-gradient(#ce9178 0 1px,transparent 1px);opacity:.6;-webkit-mask-image:repeating-linear-gradient(90deg,#000 0 1px,rgba(0,0,0,.45) 1px 2px)"></div><div style="position:absolute;left:93px;top:42px;width:2px;height:2px;background:linear-gradient(#808080 0 1px,transparent 1px);opacity:.6;-webkit-mask-image:repeating-linear-gradient(90deg,#000 0 1px,rgba(0,0,0,.45) 1px 2px)"></div><div style="position:absolute;left:9px;top:44px;width:111px;height:2px;background:#2a3440"></div><div style="position:absolute;left:41px;top:44px;width:1px;height:2px;background:linear-gradient(#808080 0 1px,transparent 1px);opacity:.6;-webkit-mask-image:repeating-linear-gradient(90deg,#000 0 1px,rgba(0,0,0,.45) 1px 2px)"></div><div style="position:absolute;left:42px;top:44px;width:11px;height:2px;background:linear-gradient(#569cd6 0 1px,transparent 1px);opacity:.6;-webkit-mask-image:repeating-linear-gradient(90deg,#000 0 1px,rgba(0,0,0,.45) 1px 2px)"></div><div style="position:absolute;left:54px;top:44px;width:9px;height:2px;background:linear-gradient(#9cdcfe 0 1px,transparent 1px);opacity:.6;-webkit-mask-image:repeating-linear-gradient(90deg,#000 0 1px,rgba(0,0,0,.45) 1px 2px)"></div><div style="position:absolute;left:63px;top:44px;width:1px;height:2px;background:linear-gradient(#d4d4d4 0 1px,transparent 1px);opacity:.6;-webkit-mask-image:repeating-linear-gradient(90deg,#000 0 1px,rgba(0,0,0,.45) 1px 2px)"></div><div style="position:absolute;left:64px;top:44px;width:4px;height:2px;background:linear-gradient(#ce9178 0 1px,transparent 1px);opacity:.6;-webkit-mask-image:repeating-linear-gradient(90deg,#000 0 1px,rgba(0,0,0,.45) 1px 2px)"></div><div style="position:absolute;left:68px;top:44px;width:1px;height:2px;background:linear-gradient(#808080 0 1px,transparent 1px);opacity:.6;-webkit-mask-image:repeating-linear-gradient(90deg,#000 0 1px,rgba(0,0,0,.45) 1px 2px)"></div><div style="position:absolute;left:69px;top:44px;width:1px;height:2px;background:linear-gradient(#808080 0 1px,transparent 1px);opacity:.6;-webkit-mask-image:repeating-linear-gradient(90deg,#000 0 1px,rgba(0,0,0,.45) 1px 2px)"></div><div style="position:absolute;left:70px;top:44px;width:12px;height:2px;background:linear-gradient(#569cd6 0 1px,transparent 1px);opacity:.6;-webkit-mask-image:repeating-linear-gradient(90deg,#000 0 1px,rgba(0,0,0,.45) 1px 2px)"></div><div style="position:absolute;left:83px;top:44px;width:6px;height:2px;background:linear-gradient(#9cdcfe 0 1px,transparent 1px);opacity:.6;-webkit-mask-image:repeating-linear-gradient(90deg,#000 0 1px,rgba(0,0,0,.45) 1px 2px)"></div><div style="position:absolute;left:89px;top:44px;width:1px;height:2px;background:linear-gradient(#d4d4d4 0 1px,transparent 1px);opacity:.6;-webkit-mask-image:repeating-linear-gradient(90deg,#000 0 1px,rgba(0,0,0,.45) 1px 2px)"></div><div style="position:absolute;left:90px;top:44px;width:11px;height:2px;background:linear-gradient(#ce9178 0 1px,transparent 1px);opacity:.6;-webkit-mask-image:repeating-linear-gradient(90deg,#000 0 1px,rgba(0,0,0,.45) 1px 2px)"></div><div style="position:absolute;left:101px;top:44px;width:2px;height:2px;background:linear-gradient(#808080 0 1px,transparent 1px);opacity:.6;-webkit-mask-image:repeating-linear-gradient(90deg,#000 0 1px,rgba(0,0,0,.45) 1px 2px)"></div><div style="position:absolute;left:103px;top:44px;width:2px;height:2px;background:linear-gradient(#808080 0 1px,transparent 1px);opacity:.6;-webkit-mask-image:repeating-linear-gradient(90deg,#000 0 1px,rgba(0,0,0,.45) 1px 2px)"></div><div style="position:absolute;left:105px;top:44px;width:11px;height:2px;background:linear-gradient(#569cd6 0 1px,transparent 1px);opacity:.6;-webkit-mask-image:repeating-linear-gradient(90deg,#000 0 1px,rgba(0,0,0,.45) 1px 2px)"></div><div style="position:absolute;left:116px;top:44px;width:1px;height:2px;background:linear-gradient(#808080 0 1px,transparent 1px);opacity:.6;-webkit-mask-image:repeating-linear-gradient(90deg,#000 0 1px,rgba(0,0,0,.45) 1px 2px)"></div><div style="position:absolute;left:41px;top:46px;width:1px;height:2px;background:linear-gradient(#808080 0 1px,transparent 1px);opacity:.6;-webkit-mask-image:repeating-linear-gradient(90deg,#000 0 1px,rgba(0,0,0,.45) 1px 2px)"></div><div style="position:absolute;left:42px;top:46px;width:6px;height:2px;background:linear-gradient(#569cd6 0 1px,transparent 1px);opacity:.6;-webkit-mask-image:repeating-linear-gradient(90deg,#000 0 1px,rgba(0,0,0,.45) 1px 2px)"></div><div style="position:absolute;left:49px;top:46px;width:4px;height:2px;background:linear-gradient(#9cdcfe 0 1px,transparent 1px);opacity:.6;-webkit-mask-image:repeating-linear-gradient(90deg,#000 0 1px,rgba(0,0,0,.45) 1px 2px)"></div><div style="position:absolute;left:53px;top:46px;width:1px;height:2px;background:linear-gradient(#d4d4d4 0 1px,transparent 1px);opacity:.6;-webkit-mask-image:repeating-linear-gradient(90deg,#000 0 1px,rgba(0,0,0,.45) 1px 2px)"></div><div style="position:absolute;left:54px;top:46px;width:35px;height:2px;background:linear-gradient(#ce9178 0 1px,transparent 1px);opacity:.6;-webkit-mask-image:repeating-linear-gradient(90deg,#000 0 1px,rgba(0,0,0,.45) 1px 2px)"></div><div style="position:absolute;left:89px;top:46px;width:1px;height:2px;background:linear-gradient(#808080 0 1px,transparent 1px);opacity:.6;-webkit-mask-image:repeating-linear-gradient(90deg,#000 0 1px,rgba(0,0,0,.45) 1px 2px)"></div><div style="position:absolute;left:45px;top:48px;width:1px;height:2px;background:linear-gradient(#808080 0 1px,transparent 1px);opacity:.6;-webkit-mask-image:repeating-linear-gradient(90deg,#000 0 1px,rgba(0,0,0,.45) 1px 2px)"></div><div style="position:absolute;left:46px;top:48px;width:9px;height:2px;background:linear-gradient(#569cd6 0 1px,transparent 1px);opacity:.6;-webkit-mask-image:repeating-linear-gradient(90deg,#000 0 1px,rgba(0,0,0,.45) 1px 2px)"></div><div style="position:absolute;left:56px;top:48px;width:4px;height:2px;background:linear-gradient(#9cdcfe 0 1px,transparent 1px);opacity:.6;-webkit-mask-image:repeating-linear-gradient(90deg,#000 0 1px,rgba(0,0,0,.45) 1px 2px)"></div><div style="position:absolute;left:60px;top:48px;width:1px;height:2px;background:linear-gradient(#d4d4d4 0 1px,transparent 1px);opacity:.6;-webkit-mask-image:repeating-linear-gradient(90deg,#000 0 1px,rgba(0,0,0,.45) 1px 2px)"></div><div style="position:absolute;left:61px;top:48px;width:13px;height:2px;background:linear-gradient(#ce9178 0 1px,transparent 1px);opacity:.6;-webkit-mask-image:repeating-linear-gradient(90deg,#000 0 1px,rgba(0,0,0,.45) 1px 2px)"></div><div style="position:absolute;left:75px;top:48px;width:6px;height:2px;background:linear-gradient(#9cdcfe 0 1px,transparent 1px);opacity:.6;-webkit-mask-image:repeating-linear-gradient(90deg,#000 0 1px,rgba(0,0,0,.45) 1px 2px)"></div><div style="position:absolute;left:81px;top:48px;width:1px;height:2px;background:linear-gradient(#d4d4d4 0 1px,transparent 1px);opacity:.6;-webkit-mask-image:repeating-linear-gradient(90deg,#000 0 1px,rgba(0,0,0,.45) 1px 2px)"></div><div style="position:absolute;left:82px;top:48px;width:3px;height:2px;background:linear-gradient(#ce9178 0 1px,transparent 1px);opacity:.6;-webkit-mask-image:repeating-linear-gradient(90deg,#000 0 1px,rgba(0,0,0,.45) 1px 2px)"></div><div style="position:absolute;left:85px;top:48px;width:1px;height:2px;background:linear-gradient(#808080 0 1px,transparent 1px);opacity:.6;-webkit-mask-image:repeating-linear-gradient(90deg,#000 0 1px,rgba(0,0,0,.45) 1px 2px)"></div><div style="position:absolute;left:86px;top:48px;width:1px;height:2px;background:linear-gradient(#808080 0 1px,transparent 1px);opacity:.6;-webkit-mask-image:repeating-linear-gradient(90deg,#000 0 1px,rgba(0,0,0,.45) 1px 2px)"></div><div style="position:absolute;left:87px;top:48px;width:12px;height:2px;background:linear-gradient(#569cd6 0 1px,transparent 1px);opacity:.6;-webkit-mask-image:repeating-linear-gradient(90deg,#000 0 1px,rgba(0,0,0,.45) 1px 2px)"></div><div style="position:absolute;left:100px;top:48px;width:6px;height:2px;background:linear-gradient(#9cdcfe 0 1px,transparent 1px);opacity:.6;-webkit-mask-image:repeating-linear-gradient(90deg,#000 0 1px,rgba(0,0,0,.45) 1px 2px)"></div><div style="position:absolute;left:106px;top:48px;width:1px;height:2px;background:linear-gradient(#d4d4d4 0 1px,transparent 1px);opacity:.6;-webkit-mask-image:repeating-linear-gradient(90deg,#000 0 1px,rgba(0,0,0,.45) 1px 2px)"></div><div style="position:absolute;left:107px;top:48px;width:27px;height:2px;background:linear-gradient(#ce9178 0 1px,transparent 1px);opacity:.6;-webkit-mask-image:repeating-linear-gradient(90deg,#000 0 1px,rgba(0,0,0,.45) 1px 2px)"></div><div style="position:absolute;left:134px;top:48px;width:2px;height:2px;background:linear-gradient(#808080 0 1px,transparent 1px);opacity:.6;-webkit-mask-image:repeating-linear-gradient(90deg,#000 0 1px,rgba(0,0,0,.45) 1px 2px)"></div><div style="position:absolute;left:136px;top:48px;width:2px;height:2px;background:linear-gradient(#808080 0 1px,transparent 1px);opacity:.6;-webkit-mask-image:repeating-linear-gradient(90deg,#000 0 1px,rgba(0,0,0,.45) 1px 2px)"></div><div style="position:absolute;left:138px;top:48px;width:9px;height:2px;background:linear-gradient(#569cd6 0 1px,transparent 1px);opacity:.6;-webkit-mask-image:repeating-linear-gradient(90deg,#000 0 1px,rgba(0,0,0,.45) 1px 2px)"></div><div style="position:absolute;left:147px;top:48px;width:1px;height:2px;background:linear-gradient(#808080 0 1px,transparent 1px);opacity:.6;-webkit-mask-image:repeating-linear-gradient(90deg,#000 0 1px,rgba(0,0,0,.45) 1px 2px)"></div><div style="position:absolute;left:41px;top:50px;width:2px;height:2px;background:linear-gradient(#808080 0 1px,transparent 1px);opacity:.6;-webkit-mask-image:repeating-linear-gradient(90deg,#000 0 1px,rgba(0,0,0,.45) 1px 2px)"></div><div style="position:absolute;left:43px;top:50px;width:6px;height:2px;background:linear-gradient(#569cd6 0 1px,transparent 1px);opacity:.6;-webkit-mask-image:repeating-linear-gradient(90deg,#000 0 1px,rgba(0,0,0,.45) 1px 2px)"></div><div style="position:absolute;left:49px;top:50px;width:1px;height:2px;background:linear-gradient(#808080 0 1px,transparent 1px);opacity:.6;-webkit-mask-image:repeating-linear-gradient(90deg,#000 0 1px,rgba(0,0,0,.45) 1px 2px)"></div><div style="position:absolute;left:37px;top:52px;width:2px;height:2px;background:linear-gradient(#808080 0 1px,transparent 1px);opacity:.6;-webkit-mask-image:repeating-linear-gradient(90deg,#000 0 1px,rgba(0,0,0,.45) 1px 2px)"></div><div style="position:absolute;left:39px;top:52px;width:12px;height:2px;background:linear-gradient(#569cd6 0 1px,transparent 1px);opacity:.6;-webkit-mask-image:repeating-linear-gradient(90deg,#000 0 1px,rgba(0,0,0,.45) 1px 2px)"></div><div style="position:absolute;left:51px;top:52px;width:1px;height:2px;background:linear-gradient(#808080 0 1px,transparent 1px);opacity:.6;-webkit-mask-image:repeating-linear-gradient(90deg,#000 0 1px,rgba(0,0,0,.45) 1px 2px)"></div><div style="position:absolute;left:33px;top:54px;width:2px;height:2px;background:linear-gradient(#808080 0 1px,transparent 1px);opacity:.6;-webkit-mask-image:repeating-linear-gradient(90deg,#000 0 1px,rgba(0,0,0,.45) 1px 2px)"></div><div style="position:absolute;left:35px;top:54px;width:5px;height:2px;background:linear-gradient(#569cd6 0 1px,transparent 1px);opacity:.6;-webkit-mask-image:repeating-linear-gradient(90deg,#000 0 1px,rgba(0,0,0,.45) 1px 2px)"></div><div style="position:absolute;left:40px;top:54px;width:1px;height:2px;background:linear-gradient(#808080 0 1px,transparent 1px);opacity:.6;-webkit-mask-image:repeating-linear-gradient(90deg,#000 0 1px,rgba(0,0,0,.45) 1px 2px)"></div><div style="position:absolute;left:29px;top:56px;width:2px;height:2px;background:linear-gradient(#808080 0 1px,transparent 1px);opacity:.6;-webkit-mask-image:repeating-linear-gradient(90deg,#000 0 1px,rgba(0,0,0,.45) 1px 2px)"></div><div style="position:absolute;left:31px;top:56px;width:5px;height:2px;background:linear-gradient(#569cd6 0 1px,transparent 1px);opacity:.6;-webkit-mask-image:repeating-linear-gradient(90deg,#000 0 1px,rgba(0,0,0,.45) 1px 2px)"></div><div style="position:absolute;left:36px;top:56px;width:1px;height:2px;background:linear-gradient(#808080 0 1px,transparent 1px);opacity:.6;-webkit-mask-image:repeating-linear-gradient(90deg,#000 0 1px,rgba(0,0,0,.45) 1px 2px)"></div><div style="position:absolute;left:25px;top:58px;width:2px;height:2px;background:linear-gradient(#808080 0 1px,transparent 1px);opacity:.6;-webkit-mask-image:repeating-linear-gradient(90deg,#000 0 1px,rgba(0,0,0,.45) 1px 2px)"></div><div style="position:absolute;left:27px;top:58px;width:6px;height:2px;background:linear-gradient(#569cd6 0 1px,transparent 1px);opacity:.6;-webkit-mask-image:repeating-linear-gradient(90deg,#000 0 1px,rgba(0,0,0,.45) 1px 2px)"></div><div style="position:absolute;left:33px;top:58px;width:1px;height:2px;background:linear-gradient(#808080 0 1px,transparent 1px);opacity:.6;-webkit-mask-image:repeating-linear-gradient(90deg,#000 0 1px,rgba(0,0,0,.45) 1px 2px)"></div><div style="position:absolute;left:21px;top:60px;width:2px;height:2px;background:linear-gradient(#808080 0 1px,transparent 1px);opacity:.6;-webkit-mask-image:repeating-linear-gradient(90deg,#000 0 1px,rgba(0,0,0,.45) 1px 2px)"></div><div style="position:absolute;left:23px;top:60px;width:4px;height:2px;background:linear-gradient(#569cd6 0 1px,transparent 1px);opacity:.6;-webkit-mask-image:repeating-linear-gradient(90deg,#000 0 1px,rgba(0,0,0,.45) 1px 2px)"></div><div style="position:absolute;left:27px;top:60px;width:1px;height:2px;background:linear-gradient(#808080 0 1px,transparent 1px);opacity:.6;-webkit-mask-image:repeating-linear-gradient(90deg,#000 0 1px,rgba(0,0,0,.45) 1px 2px)"></div><div style="position:absolute;left:17px;top:62px;width:2px;height:2px;background:linear-gradient(#808080 0 1px,transparent 1px);opacity:.6;-webkit-mask-image:repeating-linear-gradient(90deg,#000 0 1px,rgba(0,0,0,.45) 1px 2px)"></div><div style="position:absolute;left:19px;top:62px;width:14px;height:2px;background:linear-gradient(#569cd6 0 1px,transparent 1px);opacity:.6;-webkit-mask-image:repeating-linear-gradient(90deg,#000 0 1px,rgba(0,0,0,.45) 1px 2px)"></div><div style="position:absolute;left:33px;top:62px;width:1px;height:2px;background:linear-gradient(#808080 0 1px,transparent 1px);opacity:.6;-webkit-mask-image:repeating-linear-gradient(90deg,#000 0 1px,rgba(0,0,0,.45) 1px 2px)"></div><div style="position:absolute;left:13px;top:64px;width:2px;height:2px;background:linear-gradient(#808080 0 1px,transparent 1px);opacity:.6;-webkit-mask-image:repeating-linear-gradient(90deg,#000 0 1px,rgba(0,0,0,.45) 1px 2px)"></div><div style="position:absolute;left:15px;top:64px;width:12px;height:2px;background:linear-gradient(#569cd6 0 1px,transparent 1px);opacity:.6;-webkit-mask-image:repeating-linear-gradient(90deg,#000 0 1px,rgba(0,0,0,.45) 1px 2px)"></div><div style="position:absolute;left:27px;top:64px;width:1px;height:2px;background:linear-gradient(#808080 0 1px,transparent 1px);opacity:.6;-webkit-mask-image:repeating-linear-gradient(90deg,#000 0 1px,rgba(0,0,0,.45) 1px 2px)"></div><div style="position:absolute;left:9px;top:66px;width:2px;height:2px;background:linear-gradient(#808080 0 1px,transparent 1px);opacity:.6;-webkit-mask-image:repeating-linear-gradient(90deg,#000 0 1px,rgba(0,0,0,.45) 1px 2px)"></div><div style="position:absolute;left:11px;top:66px;width:14px;height:2px;background:linear-gradient(#569cd6 0 1px,transparent 1px);opacity:.6;-webkit-mask-image:repeating-linear-gradient(90deg,#000 0 1px,rgba(0,0,0,.45) 1px 2px)"></div><div style="position:absolute;left:25px;top:66px;width:1px;height:2px;background:linear-gradient(#808080 0 1px,transparent 1px);opacity:.6;-webkit-mask-image:repeating-linear-gradient(90deg,#000 0 1px,rgba(0,0,0,.45) 1px 2px)"></div>
</div>
<div class="a" style="left:897px;top:87px;width:3px;height:429px;background:linear-gradient(90deg,#000000aa,#00000000)"></div>
<div class="a" style="left:1008px;top:87px;width:1px;height:429px;background:#3a3a3a"></div>
<div class="a" style="left:1009px;top:255px;width:13px;height:2px;background:#a0a0a0"></div>
<div class="a" style="left:1022px;top:30px;width:1px;height:486px;background:#444444"></div>
<div class="a" style="left:1023px;top:30px;width:764px;height:35px;background:#252526"></div>
<div class="a" style="left:1023px;top:30px;width:121px;height:35px;background:#1e1e1e"></div>
<svg class="a" style="left:1037px;top:42px" width="10" height="10" viewBox="0 0 10 10" fill="none" stroke="#e37933" stroke-width="2"><path d="M1 1.5a7.5 7.5 0 0 1 7.5 7.5"/><path d="M1 5a4 4 0 0 1 4 4"/><circle cx="1.6" cy="8.4" r="1.2" fill="#e37933" stroke="none"/></svg>
<div class="ui" style="left:1053px;top:41px;font-size:13px;color:#8f8f8f;letter-spacing:0.2px">output.xml</div>
<svg class="a" style="left:1125px;top:43px" width="10" height="10" viewBox="0 0 10 10"><path d="M0.7 0.7 9.3 9.3M9.3 0.7 0.7 9.3" stroke="#8f8f8f" stroke-width="1.2"/></svg>
<div class="a" style="left:1758px;top:47px;width:2px;height:2px;background:#c5c5c5"></div>
<div class="a" style="left:1763px;top:47px;width:2px;height:2px;background:#c5c5c5"></div>
<div class="a" style="left:1768px;top:47px;width:2px;height:2px;background:#c5c5c5"></div>
<div class="a" style="left:1023px;top:65px;width:764px;height:22px;background:#1e1e1e"></div>
<div class="ui" style="left:1038px;top:70px;font-size:13px;color:#a9a9a9;letter-spacing:0.15px">My first job</div>
<svg class="a" style="left:1108px;top:71px" width="8" height="12" viewBox="0 0 8 12"><path d="M1.5 1 6.5 6 1.5 11" fill="none" stroke="#a9a9a9" stroke-width="1.1"/></svg>
<div class="ui" style="left:1119px;top:70px;font-size:13px;color:#a9a9a9;letter-spacing:-0.7px">assets</div>
<svg class="a" style="left:1158px;top:71px" width="8" height="12" viewBox="0 0 8 12"><path d="M1.5 1 6.5 6 1.5 11" fill="none" stroke="#a9a9a9" stroke-width="1.1"/></svg>
<div class="ui" style="left:1169px;top:70px;font-size:13px;color:#a9a9a9;letter-spacing:-2.2px">TESTS</div>
<svg class="a" style="left:1208px;top:71px" width="8" height="12" viewBox="0 0 8 12"><path d="M1.5 1 6.5 6 1.5 11" fill="none" stroke="#a9a9a9" stroke-width="1.1"/></svg>
<svg class="a" style="left:1225px;top:72px" width="10" height="10" viewBox="0 0 10 10" fill="none" stroke="#e37933" stroke-width="2"><path d="M1 1.5a7.5 7.5 0 0 1 7.5 7.5"/><path d="M1 5a4 4 0 0 1 4 4"/><circle cx="1.6" cy="8.4" r="1.2" fill="#e37933" stroke="none"/></svg>
<div class="ui" style="left:1241px;top:70px;font-size:13px;color:#a9a9a9;letter-spacing:0.2px">output.xml</div>
<div class="a" style="left:1023px;top:87px;width:764px;height:429px;background:#1e1e1e"></div>
<div class="ln" style="top:88px;left:1023px;width:41px">1</div><div class="ln" style="top:107px;left:1023px;width:41px">2</div><div class="ln" style="top:126px;left:1023px;width:41px">3</div><div class="ln" style="top:145px;left:1023px;width:41px">4</div><div class="ln" style="top:164px;left:1023px;width:41px">5</div><div class="ln" style="top:183px;left:1023px;width:41px">6</div><div class="ln" style="top:202px;left:1023px;width:41px">7</div><div class="ln" style="top:221px;left:1023px;width:41px">8</div><div class="ln" style="top:240px;left:1023px;width:41px">9</div><div class="ln" style="top:259px;left:1023px;width:41px">10</div><div class="ln" style="top:278px;left:1023px;width:41px">11</div><div class="ln" style="top:297px;left:1023px;width:41px">12</div><div class="ln" style="top:316px;left:1023px;width:41px">13</div><div class="ln" style="top:335px;left:1023px;width:41px">14</div><div class="ln" style="top:354px;left:1023px;width:41px">15</div><div class="ln" style="top:373px;left:1023px;width:41px">16</div><div class="ln" style="top:392px;left:1023px;width:41px">17</div><div class="ln act" style="top:411px;left:1023px;width:41px">18</div>
<div class="a" style="left:1090px;top:410px;width:597px;height:19px;border:2px solid #282828;border-right:none"></div>
<div class="a" style="left:1023px;top:87px;width:664px;height:429px;overflow:hidden"><div class="g" style="left:67px;top:38px;height:266px"></div><div class="g" style="left:90px;top:57px;height:228px"></div><div class="g" style="left:113px;top:114px;height:152px"></div><div class="g" style="left:136px;top:133px;height:114px"></div><div class="g" style="left:159px;top:171px;height:57px"></div><div class="cl" style="top:1px;left:67.30px"><span style="color:#808080">&lt;?</span><span style="color:#569cd6">xml</span><span style="color:#d4d4d4"> </span><span style="color:#9cdcfe">version</span><span style="color:#d4d4d4">=</span><span style="color:#ce9178">&quot;1.0&quot;</span><span style="color:#d4d4d4"> </span><span style="color:#9cdcfe">encoding</span><span style="color:#d4d4d4">=</span><span style="color:#ce9178">&quot;UTF-8&quot;</span><span style="color:#808080">?&gt;</span></div><div class="cl" style="top:20px;left:67.30px"><span style="color:#808080">&lt;</span><span style="color:#569cd6">Generate-Excel</span><span style="color:#808080">&gt;</span></div><div class="cl" style="top:39px;left:67.30px"><span style="color:#d4d4d4">   </span><span style="color:#808080">&lt;</span><span style="color:#569cd6">File</span><span style="color:#808080">&gt;</span></div><div class="cl" style="top:58px;left:67.30px"><span style="color:#d4d4d4">      </span><span style="color:#808080">&lt;</span><span style="color:#569cd6">File-Name</span><span style="color:#808080">&gt;</span><span style="color:#d4d4d4">products.xlsx</span><span style="color:#808080">&lt;/</span><span style="color:#569cd6">File-Name</span><span style="color:#808080">&gt;</span></div><div class="cl" style="top:77px;left:67.30px"><span style="color:#d4d4d4">      </span><span style="color:#808080">&lt;</span><span style="color:#569cd6">Template-Key</span><span style="color:#808080">&gt;</span><span style="color:#d4d4d4">template-tutorial</span><span style="color:#808080">&lt;/</span><span style="color:#569cd6">Template-Key</span><span style="color:#808080">&gt;</span></div><div class="cl" style="top:96px;left:67.30px"><span style="color:#d4d4d4">      </span><span style="color:#808080">&lt;</span><span style="color:#569cd6">Sheets</span><span style="color:#808080">&gt;</span></div><div class="cl" style="top:115px;left:67.30px"><span style="color:#d4d4d4">         </span><span style="color:#808080">&lt;</span><span style="color:#569cd6">Sheet</span><span style="color:#808080">&gt;</span></div><div class="cl" style="top:134px;left:67.30px"><span style="color:#d4d4d4">            </span><span style="color:#808080">&lt;</span><span style="color:#569cd6">Sheet-Name</span><span style="color:#808080">&gt;</span><span style="color:#d4d4d4">products</span><span style="color:#808080">&lt;/</span><span style="color:#569cd6">Sheet-Name</span><span style="color:#808080">&gt;</span></div><div class="cl" style="top:153px;left:67.30px"><span style="color:#d4d4d4">            </span><span style="color:#808080">&lt;</span><span style="color:#569cd6">Cells</span><span style="color:#808080">&gt;</span></div><div class="cl" style="top:172px;left:67.30px"><span style="color:#d4d4d4">               </span><span style="color:#808080">&lt;</span><span style="color:#569cd6">Cell-Text</span><span style="color:#d4d4d4"> </span><span style="color:#9cdcfe">line</span><span style="color:#d4d4d4">=</span><span style="color:#ce9178">&quot;2&quot;</span><span style="color:#d4d4d4"> </span><span style="color:#9cdcfe">column</span><span style="color:#d4d4d4">=</span><span style="color:#ce9178">&quot;2&quot;</span><span style="color:#808080">&gt;</span><span style="color:#d4d4d4">4016803051930</span><span style="color:#808080">&lt;/</span><span style="color:#569cd6">Cell-Text</span><span style="color:#808080">&gt;</span></div><div class="cl" style="top:191px;left:67.30px"><span style="color:#d4d4d4">               </span><span style="color:#808080">&lt;</span><span style="color:#569cd6">Cell-Text</span><span style="color:#d4d4d4"> </span><span style="color:#9cdcfe">line</span><span style="color:#d4d4d4">=</span><span style="color:#ce9178">&quot;3&quot;</span><span style="color:#d4d4d4"> </span><span style="color:#9cdcfe">column</span><span style="color:#d4d4d4">=</span><span style="color:#ce9178">&quot;2&quot;</span><span style="color:#808080">&gt;</span><span style="color:#d4d4d4">4016803187141</span><span style="color:#808080">&lt;/</span><span style="color:#569cd6">Cell-Text</span><span style="color:#808080">&gt;</span></div><div class="cl" style="top:210px;left:67.30px"><span style="color:#d4d4d4">               </span><span style="color:#808080">&lt;</span><span style="color:#569cd6">Cell-Text</span><span style="color:#d4d4d4"> </span><span style="color:#9cdcfe">line</span><span style="color:#d4d4d4">=</span><span style="color:#ce9178">&quot;4&quot;</span><span style="color:#d4d4d4"> </span><span style="color:#9cdcfe">column</span><span style="color:#d4d4d4">=</span><span style="color:#ce9178">&quot;2&quot;</span><span style="color:#808080">&gt;</span><span style="color:#d4d4d4">4016803167860</span><span style="color:#808080">&lt;/</span><span style="color:#569cd6">Cell-Text</span><span style="color:#808080">&gt;</span></div><div class="cl" style="top:229px;left:67.30px"><span style="color:#d4d4d4">            </span><span style="color:#808080">&lt;/</span><span style="color:#569cd6">Cells</span><span style="color:#808080">&gt;</span></div><div class="cl" style="top:248px;left:67.30px"><span style="color:#d4d4d4">         </span><span style="color:#808080">&lt;/</span><span style="color:#569cd6">Sheet</span><span style="color:#808080">&gt;</span></div><div class="cl" style="top:267px;left:67.30px"><span style="color:#d4d4d4">      </span><span style="color:#808080">&lt;/</span><span style="color:#569cd6">Sheets</span><span style="color:#808080">&gt;</span></div><div class="cl" style="top:286px;left:67.30px"><span style="color:#d4d4d4">   </span><span style="color:#808080">&lt;/</span><span style="color:#569cd6">File</span><span style="color:#808080">&gt;</span></div><div class="cl" style="top:305px;left:67.30px"><span style="color:#808080">&lt;/</span><span style="color:#569cd6">Generate-Excel</span><span style="color:#808080">&gt;</span></div><div class="cl" style="top:324px;left:67.30px"></div></div>
<div class="a" style="left:1687px;top:87px;width:86px;height:429px;overflow:hidden;background:#1e1e1e">
<div style="position:absolute;left:8px;top:0px;width:2px;height:2px;background:linear-gradient(#808080 0 1px,transparent 1px);opacity:.6;-webkit-mask-image:repeating-linear-gradient(90deg,#000 0 1px,rgba(0,0,0,.45) 1px 2px)"></div><div style="position:absolute;left:10px;top:0px;width:3px;height:2px;background:linear-gradient(#569cd6 0 1px,transparent 1px);opacity:.6;-webkit-mask-image:repeating-linear-gradient(90deg,#000 0 1px,rgba(0,0,0,.45) 1px 2px)"></div><div style="position:absolute;left:14px;top:0px;width:7px;height:2px;background:linear-gradient(#9cdcfe 0 1px,transparent 1px);opacity:.6;-webkit-mask-image:repeating-linear-gradient(90deg,#000 0 1px,rgba(0,0,0,.45) 1px 2px)"></div><div style="position:absolute;left:21px;top:0px;width:1px;height:2px;background:linear-gradient(#d4d4d4 0 1px,transparent 1px);opacity:.6;-webkit-mask-image:repeating-linear-gradient(90deg,#000 0 1px,rgba(0,0,0,.45) 1px 2px)"></div><div style="position:absolute;left:22px;top:0px;width:5px;height:2px;background:linear-gradient(#ce9178 0 1px,transparent 1px);opacity:.6;-webkit-mask-image:repeating-linear-gradient(90deg,#000 0 1px,rgba(0,0,0,.45) 1px 2px)"></div><div style="position:absolute;left:28px;top:0px;width:8px;height:2px;background:linear-gradient(#9cdcfe 0 1px,transparent 1px);opacity:.6;-webkit-mask-image:repeating-linear-gradient(90deg,#000 0 1px,rgba(0,0,0,.45) 1px 2px)"></div><div style="position:absolute;left:36px;top:0px;width:1px;height:2px;background:linear-gradient(#d4d4d4 0 1px,transparent 1px);opacity:.6;-webkit-mask-image:repeating-linear-gradient(90deg,#000 0 1px,rgba(0,0,0,.45) 1px 2px)"></div><div style="position:absolute;left:37px;top:0px;width:7px;height:2px;background:linear-gradient(#ce9178 0 1px,transparent 1px);opacity:.6;-webkit-mask-image:repeating-linear-gradient(90deg,#000 0 1px,rgba(0,0,0,.45) 1px 2px)"></div><div style="position:absolute;left:44px;top:0px;width:2px;height:2px;background:linear-gradient(#808080 0 1px,transparent 1px);opacity:.6;-webkit-mask-image:repeating-linear-gradient(90deg,#000 0 1px,rgba(0,0,0,.45) 1px 2px)"></div><div style="position:absolute;left:8px;top:2px;width:1px;height:2px;background:linear-gradient(#808080 0 1px,transparent 1px);opacity:.6;-webkit-mask-image:repeating-linear-gradient(90deg,#000 0 1px,rgba(0,0,0,.45) 1px 2px)"></div><div style="position:absolute;left:9px;top:2px;width:14px;height:2px;background:linear-gradient(#569cd6 0 1px,transparent 1px);opacity:.6;-webkit-mask-image:repeating-linear-gradient(90deg,#000 0 1px,rgba(0,0,0,.45) 1px 2px)"></div><div style="position:absolute;left:23px;top:2px;width:1px;height:2px;background:linear-gradient(#808080 0 1px,transparent 1px);opacity:.6;-webkit-mask-image:repeating-linear-gradient(90deg,#000 0 1px,rgba(0,0,0,.45) 1px 2px)"></div><div style="position:absolute;left:11px;top:4px;width:1px;height:2px;background:linear-gradient(#808080 0 1px,transparent 1px);opacity:.6;-webkit-mask-image:repeating-linear-gradient(90deg,#000 0 1px,rgba(0,0,0,.45) 1px 2px)"></div><div style="position:absolute;left:12px;top:4px;width:4px;height:2px;background:linear-gradient(#569cd6 0 1px,transparent 1px);opacity:.6;-webkit-mask-image:repeating-linear-gradient(90deg,#000 0 1px,rgba(0,0,0,.45) 1px 2px)"></div><div style="position:absolute;left:16px;top:4px;width:1px;height:2px;background:linear-gradient(#808080 0 1px,transparent 1px);opacity:.6;-webkit-mask-image:repeating-linear-gradient(90deg,#000 0 1px,rgba(0,0,0,.45) 1px 2px)"></div><div style="position:absolute;left:14px;top:6px;width:1px;height:2px;background:linear-gradient(#808080 0 1px,transparent 1px);opacity:.6;-webkit-mask-image:repeating-linear-gradient(90deg,#000 0 1px,rgba(0,0,0,.45) 1px 2px)"></div><div style="position:absolute;left:15px;top:6px;width:9px;height:2px;background:linear-gradient(#569cd6 0 1px,transparent 1px);opacity:.6;-webkit-mask-image:repeating-linear-gradient(90deg,#000 0 1px,rgba(0,0,0,.45) 1px 2px)"></div><div style="position:absolute;left:24px;top:6px;width:1px;height:2px;background:linear-gradient(#808080 0 1px,transparent 1px);opacity:.6;-webkit-mask-image:repeating-linear-gradient(90deg,#000 0 1px,rgba(0,0,0,.45) 1px 2px)"></div><div style="position:absolute;left:25px;top:6px;width:13px;height:2px;background:linear-gradient(#d4d4d4 0 1px,transparent 1px);opacity:.6;-webkit-mask-image:repeating-linear-gradient(90deg,#000 0 1px,rgba(0,0,0,.45) 1px 2px)"></div><div style="position:absolute;left:38px;top:6px;width:2px;height:2px;background:linear-gradient(#808080 0 1px,transparent 1px);opacity:.6;-webkit-mask-image:repeating-linear-gradient(90deg,#000 0 1px,rgba(0,0,0,.45) 1px 2px)"></div><div style="position:absolute;left:40px;top:6px;width:9px;height:2px;background:linear-gradient(#569cd6 0 1px,transparent 1px);opacity:.6;-webkit-mask-image:repeating-linear-gradient(90deg,#000 0 1px,rgba(0,0,0,.45) 1px 2px)"></div><div style="position:absolute;left:49px;top:6px;width:1px;height:2px;background:linear-gradient(#808080 0 1px,transparent 1px);opacity:.6;-webkit-mask-image:repeating-linear-gradient(90deg,#000 0 1px,rgba(0,0,0,.45) 1px 2px)"></div><div style="position:absolute;left:14px;top:8px;width:1px;height:2px;background:linear-gradient(#808080 0 1px,transparent 1px);opacity:.6;-webkit-mask-image:repeating-linear-gradient(90deg,#000 0 1px,rgba(0,0,0,.45) 1px 2px)"></div><div style="position:absolute;left:15px;top:8px;width:12px;height:2px;background:linear-gradient(#569cd6 0 1px,transparent 1px);opacity:.6;-webkit-mask-image:repeating-linear-gradient(90deg,#000 0 1px,rgba(0,0,0,.45) 1px 2px)"></div><div style="position:absolute;left:27px;top:8px;width:1px;height:2px;background:linear-gradient(#808080 0 1px,transparent 1px);opacity:.6;-webkit-mask-image:repeating-linear-gradient(90deg,#000 0 1px,rgba(0,0,0,.45) 1px 2px)"></div><div style="position:absolute;left:28px;top:8px;width:17px;height:2px;background:linear-gradient(#d4d4d4 0 1px,transparent 1px);opacity:.6;-webkit-mask-image:repeating-linear-gradient(90deg,#000 0 1px,rgba(0,0,0,.45) 1px 2px)"></div><div style="position:absolute;left:45px;top:8px;width:2px;height:2px;background:linear-gradient(#808080 0 1px,transparent 1px);opacity:.6;-webkit-mask-image:repeating-linear-gradient(90deg,#000 0 1px,rgba(0,0,0,.45) 1px 2px)"></div><div style="position:absolute;left:47px;top:8px;width:12px;height:2px;background:linear-gradient(#569cd6 0 1px,transparent 1px);opacity:.6;-webkit-mask-image:repeating-linear-gradient(90deg,#000 0 1px,rgba(0,0,0,.45) 1px 2px)"></div><div style="position:absolute;left:59px;top:8px;width:1px;height:2px;background:linear-gradient(#808080 0 1px,transparent 1px);opacity:.6;-webkit-mask-image:repeating-linear-gradient(90deg,#000 0 1px,rgba(0,0,0,.45) 1px 2px)"></div><div style="position:absolute;left:14px;top:10px;width:1px;height:2px;background:linear-gradient(#808080 0 1px,transparent 1px);opacity:.6;-webkit-mask-image:repeating-linear-gradient(90deg,#000 0 1px,rgba(0,0,0,.45) 1px 2px)"></div><div style="position:absolute;left:15px;top:10px;width:6px;height:2px;background:linear-gradient(#569cd6 0 1px,transparent 1px);opacity:.6;-webkit-mask-image:repeating-linear-gradient(90deg,#000 0 1px,rgba(0,0,0,.45) 1px 2px)"></div><div style="position:absolute;left:21px;top:10px;width:1px;height:2px;background:linear-gradient(#808080 0 1px,transparent 1px);opacity:.6;-webkit-mask-image:repeating-linear-gradient(90deg,#000 0 1px,rgba(0,0,0,.45) 1px 2px)"></div><div style="position:absolute;left:17px;top:12px;width:1px;height:2px;background:linear-gradient(#808080 0 1px,transparent 1px);opacity:.6;-webkit-mask-image:repeating-linear-gradient(90deg,#000 0 1px,rgba(0,0,0,.45) 1px 2px)"></div><div style="position:absolute;left:18px;top:12px;width:5px;height:2px;background:linear-gradient(#569cd6 0 1px,transparent 1px);opacity:.6;-webkit-mask-image:repeating-linear-gradient(90deg,#000 0 1px,rgba(0,0,0,.45) 1px 2px)"></div><div style="position:absolute;left:23px;top:12px;width:1px;height:2px;background:linear-gradient(#808080 0 1px,transparent 1px);opacity:.6;-webkit-mask-image:repeating-linear-gradient(90deg,#000 0 1px,rgba(0,0,0,.45) 1px 2px)"></div><div style="position:absolute;left:20px;top:14px;width:1px;height:2px;background:linear-gradient(#808080 0 1px,transparent 1px);opacity:.6;-webkit-mask-image:repeating-linear-gradient(90deg,#000 0 1px,rgba(0,0,0,.45) 1px 2px)"></div><div style="position:absolute;left:21px;top:14px;width:10px;height:2px;background:linear-gradient(#569cd6 0 1px,transparent 1px);opacity:.6;-webkit-mask-image:repeating-linear-gradient(90deg,#000 0 1px,rgba(0,0,0,.45) 1px 2px)"></div><div style="position:absolute;left:31px;top:14px;width:1px;height:2px;background:linear-gradient(#808080 0 1px,transparent 1px);opacity:.6;-webkit-mask-image:repeating-linear-gradient(90deg,#000 0 1px,rgba(0,0,0,.45) 1px 2px)"></div><div style="position:absolute;left:32px;top:14px;width:8px;height:2px;background:linear-gradient(#d4d4d4 0 1px,transparent 1px);opacity:.6;-webkit-mask-image:repeating-linear-gradient(90deg,#000 0 1px,rgba(0,0,0,.45) 1px 2px)"></div><div style="position:absolute;left:40px;top:14px;width:2px;height:2px;background:linear-gradient(#808080 0 1px,transparent 1px);opacity:.6;-webkit-mask-image:repeating-linear-gradient(90deg,#000 0 1px,rgba(0,0,0,.45) 1px 2px)"></div><div style="position:absolute;left:42px;top:14px;width:10px;height:2px;background:linear-gradient(#569cd6 0 1px,transparent 1px);opacity:.6;-webkit-mask-image:repeating-linear-gradient(90deg,#000 0 1px,rgba(0,0,0,.45) 1px 2px)"></div><div style="position:absolute;left:52px;top:14px;width:1px;height:2px;background:linear-gradient(#808080 0 1px,transparent 1px);opacity:.6;-webkit-mask-image:repeating-linear-gradient(90deg,#000 0 1px,rgba(0,0,0,.45) 1px 2px)"></div><div style="position:absolute;left:20px;top:16px;width:1px;height:2px;background:linear-gradient(#808080 0 1px,transparent 1px);opacity:.6;-webkit-mask-image:repeating-linear-gradient(90deg,#000 0 1px,rgba(0,0,0,.45) 1px 2px)"></div><div style="position:absolute;left:21px;top:16px;width:5px;height:2px;background:linear-gradient(#569cd6 0 1px,transparent 1px);opacity:.6;-webkit-mask-image:repeating-linear-gradient(90deg,#000 0 1px,rgba(0,0,0,.45) 1px 2px)"></div><div style="position:absolute;left:26px;top:16px;width:1px;height:2px;background:linear-gradient(#808080 0 1px,transparent 1px);opacity:.6;-webkit-mask-image:repeating-linear-gradient(90deg,#000 0 1px,rgba(0,0,0,.45) 1px 2px)"></div><div style="position:absolute;left:23px;top:18px;width:1px;height:2px;background:linear-gradient(#808080 0 1px,transparent 1px);opacity:.6;-webkit-mask-image:repeating-linear-gradient(90deg,#000 0 1px,rgba(0,0,0,.45) 1px 2px)"></div><div style="position:absolute;left:24px;top:18px;width:9px;height:2px;background:linear-gradient(#569cd6 0 1px,transparent 1px);opacity:.6;-webkit-mask-image:repeating-linear-gradient(90deg,#000 0 1px,rgba(0,0,0,.45) 1px 2px)"></div><div style="position:absolute;left:34px;top:18px;width:4px;height:2px;background:linear-gradient(#9cdcfe 0 1px,transparent 1px);opacity:.6;-webkit-mask-image:repeating-linear-gradient(90deg,#000 0 1px,rgba(0,0,0,.45) 1px 2px)"></div><div style="position:absolute;left:38px;top:18px;width:1px;height:2px;background:linear-gradient(#d4d4d4 0 1px,transparent 1px);opacity:.6;-webkit-mask-image:repeating-linear-gradient(90deg,#000 0 1px,rgba(0,0,0,.45) 1px 2px)"></div><div style="position:absolute;left:39px;top:18px;width:3px;height:2px;background:linear-gradient(#ce9178 0 1px,transparent 1px);opacity:.6;-webkit-mask-image:repeating-linear-gradient(90deg,#000 0 1px,rgba(0,0,0,.45) 1px 2px)"></div><div style="position:absolute;left:43px;top:18px;width:6px;height:2px;background:linear-gradient(#9cdcfe 0 1px,transparent 1px);opacity:.6;-webkit-mask-image:repeating-linear-gradient(90deg,#000 0 1px,rgba(0,0,0,.45) 1px 2px)"></div><div style="position:absolute;left:49px;top:18px;width:1px;height:2px;background:linear-gradient(#d4d4d4 0 1px,transparent 1px);opacity:.6;-webkit-mask-image:repeating-linear-gradient(90deg,#000 0 1px,rgba(0,0,0,.45) 1px 2px)"></div><div style="position:absolute;left:50px;top:18px;width:3px;height:2px;background:linear-gradient(#ce9178 0 1px,transparent 1px);opacity:.6;-webkit-mask-image:repeating-linear-gradient(90deg,#000 0 1px,rgba(0,0,0,.45) 1px 2px)"></div><div style="position:absolute;left:53px;top:18px;width:1px;height:2px;background:linear-gradient(#808080 0 1px,transparent 1px);opacity:.6;-webkit-mask-image:repeating-linear-gradient(90deg,#000 0 1px,rgba(0,0,0,.45) 1px 2px)"></div><div style="position:absolute;left:54px;top:18px;width:13px;height:2px;background:linear-gradient(#d4d4d4 0 1px,transparent 1px);opacity:.6;-webkit-mask-image:repeating-linear-gradient(90deg,#000 0 1px,rgba(0,0,0,.45) 1px 2px)"></div><div style="position:absolute;left:67px;top:18px;width:2px;height:2px;background:linear-gradient(#808080 0 1px,transparent 1px);opacity:.6;-webkit-mask-image:repeating-linear-gradient(90deg,#000 0 1px,rgba(0,0,0,.45) 1px 2px)"></div><div style="position:absolute;left:69px;top:18px;width:9px;height:2px;background:linear-gradient(#569cd6 0 1px,transparent 1px);opacity:.6;-webkit-mask-image:repeating-linear-gradient(90deg,#000 0 1px,rgba(0,0,0,.45) 1px 2px)"></div><div style="position:absolute;left:78px;top:18px;width:1px;height:2px;background:linear-gradient(#808080 0 1px,transparent 1px);opacity:.6;-webkit-mask-image:repeating-linear-gradient(90deg,#000 0 1px,rgba(0,0,0,.45) 1px 2px)"></div><div style="position:absolute;left:23px;top:20px;width:1px;height:2px;background:linear-gradient(#808080 0 1px,transparent 1px);opacity:.6;-webkit-mask-image:repeating-linear-gradient(90deg,#000 0 1px,rgba(0,0,0,.45) 1px 2px)"></div><div style="position:absolute;left:24px;top:20px;width:9px;height:2px;background:linear-gradient(#569cd6 0 1px,transparent 1px);opacity:.6;-webkit-mask-image:repeating-linear-gradient(90deg,#000 0 1px,rgba(0,0,0,.45) 1px 2px)"></div><div style="position:absolute;left:34px;top:20px;width:4px;height:2px;background:linear-gradient(#9cdcfe 0 1px,transparent 1px);opacity:.6;-webkit-mask-image:repeating-linear-gradient(90deg,#000 0 1px,rgba(0,0,0,.45) 1px 2px)"></div><div style="position:absolute;left:38px;top:20px;width:1px;height:2px;background:linear-gradient(#d4d4d4 0 1px,transparent 1px);opacity:.6;-webkit-mask-image:repeating-linear-gradient(90deg,#000 0 1px,rgba(0,0,0,.45) 1px 2px)"></div><div style="position:absolute;left:39px;top:20px;width:3px;height:2px;background:linear-gradient(#ce9178 0 1px,transparent 1px);opacity:.6;-webkit-mask-image:repeating-linear-gradient(90deg,#000 0 1px,rgba(0,0,0,.45) 1px 2px)"></div><div style="position:absolute;left:43px;top:20px;width:6px;height:2px;background:linear-gradient(#9cdcfe 0 1px,transparent 1px);opacity:.6;-webkit-mask-image:repeating-linear-gradient(90deg,#000 0 1px,rgba(0,0,0,.45) 1px 2px)"></div><div style="position:absolute;left:49px;top:20px;width:1px;height:2px;background:linear-gradient(#d4d4d4 0 1px,transparent 1px);opacity:.6;-webkit-mask-image:repeating-linear-gradient(90deg,#000 0 1px,rgba(0,0,0,.45) 1px 2px)"></div><div style="position:absolute;left:50px;top:20px;width:3px;height:2px;background:linear-gradient(#ce9178 0 1px,transparent 1px);opacity:.6;-webkit-mask-image:repeating-linear-gradient(90deg,#000 0 1px,rgba(0,0,0,.45) 1px 2px)"></div><div style="position:absolute;left:53px;top:20px;width:1px;height:2px;background:linear-gradient(#808080 0 1px,transparent 1px);opacity:.6;-webkit-mask-image:repeating-linear-gradient(90deg,#000 0 1px,rgba(0,0,0,.45) 1px 2px)"></div><div style="position:absolute;left:54px;top:20px;width:13px;height:2px;background:linear-gradient(#d4d4d4 0 1px,transparent 1px);opacity:.6;-webkit-mask-image:repeating-linear-gradient(90deg,#000 0 1px,rgba(0,0,0,.45) 1px 2px)"></div><div style="position:absolute;left:67px;top:20px;width:2px;height:2px;background:linear-gradient(#808080 0 1px,transparent 1px);opacity:.6;-webkit-mask-image:repeating-linear-gradient(90deg,#000 0 1px,rgba(0,0,0,.45) 1px 2px)"></div><div style="position:absolute;left:69px;top:20px;width:9px;height:2px;background:linear-gradient(#569cd6 0 1px,transparent 1px);opacity:.6;-webkit-mask-image:repeating-linear-gradient(90deg,#000 0 1px,rgba(0,0,0,.45) 1px 2px)"></div><div style="position:absolute;left:78px;top:20px;width:1px;height:2px;background:linear-gradient(#808080 0 1px,transparent 1px);opacity:.6;-webkit-mask-image:repeating-linear-gradient(90deg,#000 0 1px,rgba(0,0,0,.45) 1px 2px)"></div><div style="position:absolute;left:23px;top:22px;width:1px;height:2px;background:linear-gradient(#808080 0 1px,transparent 1px);opacity:.6;-webkit-mask-image:repeating-linear-gradient(90deg,#000 0 1px,rgba(0,0,0,.45) 1px 2px)"></div><div style="position:absolute;left:24px;top:22px;width:9px;height:2px;background:linear-gradient(#569cd6 0 1px,transparent 1px);opacity:.6;-webkit-mask-image:repeating-linear-gradient(90deg,#000 0 1px,rgba(0,0,0,.45) 1px 2px)"></div><div style="position:absolute;left:34px;top:22px;width:4px;height:2px;background:linear-gradient(#9cdcfe 0 1px,transparent 1px);opacity:.6;-webkit-mask-image:repeating-linear-gradient(90deg,#000 0 1px,rgba(0,0,0,.45) 1px 2px)"></div><div style="position:absolute;left:38px;top:22px;width:1px;height:2px;background:linear-gradient(#d4d4d4 0 1px,transparent 1px);opacity:.6;-webkit-mask-image:repeating-linear-gradient(90deg,#000 0 1px,rgba(0,0,0,.45) 1px 2px)"></div><div style="position:absolute;left:39px;top:22px;width:3px;height:2px;background:linear-gradient(#ce9178 0 1px,transparent 1px);opacity:.6;-webkit-mask-image:repeating-linear-gradient(90deg,#000 0 1px,rgba(0,0,0,.45) 1px 2px)"></div><div style="position:absolute;left:43px;top:22px;width:6px;height:2px;background:linear-gradient(#9cdcfe 0 1px,transparent 1px);opacity:.6;-webkit-mask-image:repeating-linear-gradient(90deg,#000 0 1px,rgba(0,0,0,.45) 1px 2px)"></div><div style="position:absolute;left:49px;top:22px;width:1px;height:2px;background:linear-gradient(#d4d4d4 0 1px,transparent 1px);opacity:.6;-webkit-mask-image:repeating-linear-gradient(90deg,#000 0 1px,rgba(0,0,0,.45) 1px 2px)"></div><div style="position:absolute;left:50px;top:22px;width:3px;height:2px;background:linear-gradient(#ce9178 0 1px,transparent 1px);opacity:.6;-webkit-mask-image:repeating-linear-gradient(90deg,#000 0 1px,rgba(0,0,0,.45) 1px 2px)"></div><div style="position:absolute;left:53px;top:22px;width:1px;height:2px;background:linear-gradient(#808080 0 1px,transparent 1px);opacity:.6;-webkit-mask-image:repeating-linear-gradient(90deg,#000 0 1px,rgba(0,0,0,.45) 1px 2px)"></div><div style="position:absolute;left:54px;top:22px;width:13px;height:2px;background:linear-gradient(#d4d4d4 0 1px,transparent 1px);opacity:.6;-webkit-mask-image:repeating-linear-gradient(90deg,#000 0 1px,rgba(0,0,0,.45) 1px 2px)"></div><div style="position:absolute;left:67px;top:22px;width:2px;height:2px;background:linear-gradient(#808080 0 1px,transparent 1px);opacity:.6;-webkit-mask-image:repeating-linear-gradient(90deg,#000 0 1px,rgba(0,0,0,.45) 1px 2px)"></div><div style="position:absolute;left:69px;top:22px;width:9px;height:2px;background:linear-gradient(#569cd6 0 1px,transparent 1px);opacity:.6;-webkit-mask-image:repeating-linear-gradient(90deg,#000 0 1px,rgba(0,0,0,.45) 1px 2px)"></div><div style="position:absolute;left:78px;top:22px;width:1px;height:2px;background:linear-gradient(#808080 0 1px,transparent 1px);opacity:.6;-webkit-mask-image:repeating-linear-gradient(90deg,#000 0 1px,rgba(0,0,0,.45) 1px 2px)"></div><div style="position:absolute;left:20px;top:24px;width:2px;height:2px;background:linear-gradient(#808080 0 1px,transparent 1px);opacity:.6;-webkit-mask-image:repeating-linear-gradient(90deg,#000 0 1px,rgba(0,0,0,.45) 1px 2px)"></div><div style="position:absolute;left:22px;top:24px;width:5px;height:2px;background:linear-gradient(#569cd6 0 1px,transparent 1px);opacity:.6;-webkit-mask-image:repeating-linear-gradient(90deg,#000 0 1px,rgba(0,0,0,.45) 1px 2px)"></div><div style="position:absolute;left:27px;top:24px;width:1px;height:2px;background:linear-gradient(#808080 0 1px,transparent 1px);opacity:.6;-webkit-mask-image:repeating-linear-gradient(90deg,#000 0 1px,rgba(0,0,0,.45) 1px 2px)"></div><div style="position:absolute;left:17px;top:26px;width:2px;height:2px;background:linear-gradient(#808080 0 1px,transparent 1px);opacity:.6;-webkit-mask-image:repeating-linear-gradient(90deg,#000 0 1px,rgba(0,0,0,.45) 1px 2px)"></div><div style="position:absolute;left:19px;top:26px;width:5px;height:2px;background:linear-gradient(#569cd6 0 1px,transparent 1px);opacity:.6;-webkit-mask-image:repeating-linear-gradient(90deg,#000 0 1px,rgba(0,0,0,.45) 1px 2px)"></div><div style="position:absolute;left:24px;top:26px;width:1px;height:2px;background:linear-gradient(#808080 0 1px,transparent 1px);opacity:.6;-webkit-mask-image:repeating-linear-gradient(90deg,#000 0 1px,rgba(0,0,0,.45) 1px 2px)"></div><div style="position:absolute;left:14px;top:28px;width:2px;height:2px;background:linear-gradient(#808080 0 1px,transparent 1px);opacity:.6;-webkit-mask-image:repeating-linear-gradient(90deg,#000 0 1px,rgba(0,0,0,.45) 1px 2px)"></div><div style="position:absolute;left:16px;top:28px;width:6px;height:2px;background:linear-gradient(#569cd6 0 1px,transparent 1px);opacity:.6;-webkit-mask-image:repeating-linear-gradient(90deg,#000 0 1px,rgba(0,0,0,.45) 1px 2px)"></div><div style="position:absolute;left:22px;top:28px;width:1px;height:2px;background:linear-gradient(#808080 0 1px,transparent 1px);opacity:.6;-webkit-mask-image:repeating-linear-gradient(90deg,#000 0 1px,rgba(0,0,0,.45) 1px 2px)"></div><div style="position:absolute;left:11px;top:30px;width:2px;height:2px;background:linear-gradient(#808080 0 1px,transparent 1px);opacity:.6;-webkit-mask-image:repeating-linear-gradient(90deg,#000 0 1px,rgba(0,0,0,.45) 1px 2px)"></div><div style="position:absolute;left:13px;top:30px;width:4px;height:2px;background:linear-gradient(#569cd6 0 1px,transparent 1px);opacity:.6;-webkit-mask-image:repeating-linear-gradient(90deg,#000 0 1px,rgba(0,0,0,.45) 1px 2px)"></div><div style="position:absolute;left:17px;top:30px;width:1px;height:2px;background:linear-gradient(#808080 0 1px,transparent 1px);opacity:.6;-webkit-mask-image:repeating-linear-gradient(90deg,#000 0 1px,rgba(0,0,0,.45) 1px 2px)"></div><div style="position:absolute;left:8px;top:32px;width:2px;height:2px;background:linear-gradient(#808080 0 1px,transparent 1px);opacity:.6;-webkit-mask-image:repeating-linear-gradient(90deg,#000 0 1px,rgba(0,0,0,.45) 1px 2px)"></div><div style="position:absolute;left:10px;top:32px;width:14px;height:2px;background:linear-gradient(#569cd6 0 1px,transparent 1px);opacity:.6;-webkit-mask-image:repeating-linear-gradient(90deg,#000 0 1px,rgba(0,0,0,.45) 1px 2px)"></div><div style="position:absolute;left:24px;top:32px;width:1px;height:2px;background:linear-gradient(#808080 0 1px,transparent 1px);opacity:.6;-webkit-mask-image:repeating-linear-gradient(90deg,#000 0 1px,rgba(0,0,0,.45) 1px 2px)"></div><div style="position:absolute;left:8px;top:34px;width:86px;height:2px;background:#2a3440"></div>
</div>
<div class="a" style="left:1773px;top:87px;width:1px;height:429px;background:#3a3a3a"></div>
<div class="a" style="left:1774px;top:270px;width:13px;height:2px;background:#a0a0a0"></div>
<div class="a" style="left:48px;top:516px;width:1739px;height:209px;background:#1e1e1e;border-top:1px solid #454545"></div>
<div class="ui" style="left:70px;top:530px;font-size:11px;color:#969696;letter-spacing:-1.0px">PROBLEMS</div>
<div class="a" style="left:134px;top:526px;width:18px;height:18px;border-radius:50%;background:#4d4d4d"></div>
<div class="ui" style="left:140px;top:530px;font-size:11px;color:#ffffff">6</div>
<div class="ui" style="left:174px;top:530px;font-size:11px;color:#e7e7e7;letter-spacing:-0.84px">OUTPUT</div>
<div class="a" style="left:172px;top:550px;width:45px;height:1px;background:#e7e7e7"></div>
<div class="ui" style="left:239px;top:530px;font-size:11px;color:#969696;letter-spacing:-0.64px">TERMINAL</div>
<div class="ui" style="left:314px;top:530px;font-size:11px;color:#969696;letter-spacing:-0.83px">DEBUG CONSOLE</div>
<div class="a" style="left:1483px;top:524px;width:170px;height:22px;background:#3c3c3c"></div>
<div class="ui" style="left:1492px;top:529px;font-size:13px;color:#f0f0f0">Task output</div>
<svg class="a" style="left:1633px;top:531px" width="12" height="8" viewBox="0 0 12 8"><path d="M1 1.5 6 6.5 11 1.5" fill="none" stroke="#c5c5c5" stroke-width="1.2"/></svg>
<svg class="a" style="left:1660px;top:528px" width="16" height="14" viewBox="0 0 16 14" fill="none" stroke="#c5c5c5" stroke-width="1.1"><path d="M1 1.5h14M1 5h14M1 8.5h9M1 12h7M10.5 8.5l4 4M14.5 8.5l-4 4"/></svg>
<svg class="a" style="left:1687px;top:526px" width="14" height="17" viewBox="0 0 14 17" fill="none" stroke="#c5c5c5" stroke-width="1.2"><path d="M3.5 7.5V5a3.5 3.5 0 0 1 7 0"/><rect x="1.5" y="8" width="11" height="8"/></svg>
<svg class="a" style="left:1713px;top:527px" width="15" height="16" viewBox="0 0 15 16" fill="none" stroke="#5a5a5a" stroke-width="1.1"><path d="M5 1.5h5l3 3V12H5z"/><path d="M5 4.5H2V15h8v-3"/></svg>
<svg class="a" style="left:1740px;top:531px" width="12" height="8" viewBox="0 0 12 8"><path d="M1 6.5 6 1.5 11 6.5" fill="none" stroke="#c5c5c5" stroke-width="1.2"/></svg>
<svg class="a" style="left:1763px;top:530px" width="10" height="10" viewBox="0 0 10 10"><path d="M0.6 0.6 9.4 9.4M9.4 0.6 0.6 9.4" stroke="#c5c5c5" stroke-width="1.2"/></svg>
<div class="ol" style="top:551.5px">2021-11-15T08:47:14.027Z - XSLT transformation started on &quot;assets/my-xslt.xslt&quot;</div>
<div class="ol" style="top:570.5px">2021-11-15T08:47:14.666Z -    XSLT transformation done with success in 00:00:00.640   </div>
<svg style="position:absolute;left:276.419px;top:572.0px" width="17" height="17" viewBox="0 0 16 16"><path d="M1.3 13V7.6L4.6 6.4 7.2 1.4Q8.2.6 8.6 1.8L8.4 6.2H11.6Q13.3 6.6 13 8.3L12.7 11.8Q12.4 13 11.1 13Z" fill="#fdd43a" stroke="#120c00" stroke-width="1"/><path d="M8.4 8.2h4.2M8.4 9.9h4M8.4 11.5h3.8" stroke="#f2a51c" stroke-width=".9"/></svg>
<svg style="position:absolute;left:715.148px;top:572.0px" width="17" height="17" viewBox="0 0 16 16"><path d="M1.3 13V7.6L4.6 6.4 7.2 1.4Q8.2.6 8.6 1.8L8.4 6.2H11.6Q13.3 6.6 13 8.3L12.7 11.8Q12.4 13 11.1 13Z" fill="#fdd43a" stroke="#120c00" stroke-width="1"/><path d="M8.4 8.2h4.2M8.4 9.9h4M8.4 11.5h3.8" stroke="#f2a51c" stroke-width=".9"/></svg>
<div class="ol" style="top:589.5px"></div>
<div class="ol" style="top:608.5px">2</div>
<div class="ol" style="top:627.5px">3</div>
<div class="ol" style="top:646.5px">4</div>
<div class="ol" style="top:665.5px">2021-11-15T08:47:14.667Z - XSD validation started on &quot;assets/TESTS/output.xml&quot;</div>
<div class="ol" style="top:684.5px">2021-11-15T08:47:14.911Z -    XSD validation done with success in 00:00:00.244   </div>
<svg style="position:absolute;left:276.419px;top:686.0px" width="17" height="17" viewBox="0 0 16 16"><path d="M1.3 13V7.6L4.6 6.4 7.2 1.4Q8.2.6 8.6 1.8L8.4 6.2H11.6Q13.3 6.6 13 8.3L12.7 11.8Q12.4 13 11.1 13Z" fill="#fdd43a" stroke="#120c00" stroke-width="1"/><path d="M8.4 8.2h4.2M8.4 9.9h4M8.4 11.5h3.8" stroke="#f2a51c" stroke-width=".9"/></svg>
<svg style="position:absolute;left:676.663px;top:686.0px" width="17" height="17" viewBox="0 0 16 16"><path d="M1.3 13V7.6L4.6 6.4 7.2 1.4Q8.2.6 8.6 1.8L8.4 6.2H11.6Q13.3 6.6 13 8.3L12.7 11.8Q12.4 13 11.1 13Z" fill="#fdd43a" stroke="#120c00" stroke-width="1"/><path d="M8.4 8.2h4.2M8.4 9.9h4M8.4 11.5h3.8" stroke="#f2a51c" stroke-width=".9"/></svg>
<div class="a" style="left:68px;top:703px;width:2px;height:19px;background:#aeafad"></div>
<div class="a" style="left:1773px;top:551px;width:1px;height:174px;background:#3a3a3a"></div>
<div class="a" style="left:0;top:725px;width:1787px;height:22px;background:#367ecd"></div>
<svg class="a" style="left:15px;top:729px" width="14" height="14" viewBox="0 0 14 14" fill="none" stroke="#ffffff" stroke-width="1.1"><circle cx="7" cy="7" r="6"/><path d="M4.5 4.5l5 5M9.5 4.5l-5 5"/></svg>
<div class="ui" style="left:32px;top:731px;font-size:12px;color:#ffffff">6</div>
<svg class="a" style="left:42px;top:729px" width="14" height="13" viewBox="0 0 14 13" fill="none" stroke="#ffffff" stroke-width="1.1"><path d="M7 1 13 12H1z"/><path d="M7 5v3.5M7 9.5v1"/></svg>
<div class="ui" style="left:59px;top:731px;font-size:12px;color:#ffffff">0</div>
<svg class="a" style="left:83px;top:728px" width="11" height="15" viewBox="0 0 11 15" fill="none" stroke="#ffffff" stroke-width="1.1"><rect x="1" y="1.5" width="9" height="12.5"/><path d="M3 1v2h5V1M3 6h5M3 8.5h5M3 11h5"/></svg>
<div class="ui" style="left:98px;top:731px;font-size:12px;color:#ffffff">0</div>
<svg class="a" style="left:122px;top:729px" width="13" height="13" viewBox="0 0 13 13" fill="none" stroke="#ffffff" stroke-width="1.3"><path d="M2 0v13M6.5 0v13M11 0v13"/><path d="M0 9h4M4.5 4h4M9 8h4" stroke-width="2"/></svg>
<div class="ui" style="left:140px;top:731px;font-size:12px;color:#ffffff;letter-spacing:-0.2px">Input: "assets/TESTS/input.xml"</div>
<svg class="a" style="left:320px;top:729px" width="13" height="13" viewBox="0 0 13 13" fill="none" stroke="#ffffff" stroke-width="1.3"><path d="M2 0v13M6.5 0v13M11 0v13"/><path d="M0 9h4M4.5 4h4M9 8h4" stroke-width="2"/></svg>
<div class="ui" style="left:337px;top:731px;font-size:12px;color:#ffffff;letter-spacing:0.1px">Output: ".xml"</div>
<svg class="a" style="left:427px;top:729px" width="13" height="13" viewBox="0 0 13 13" fill="none" stroke="#ffffff" stroke-width="1.3"><path d="M2 0v13M6.5 0v13M11 0v13"/><path d="M0 9h4M4.5 4h4M9 8h4" stroke-width="2"/></svg>
<div class="ui" style="left:444px;top:731px;font-size:12px;color:#ffffff;letter-spacing:-0.36px">XSD: "Generate Excel"</div>
<svg class="a" style="left:578px;top:730px" width="8" height="12" viewBox="0 0 8 12"><path d="M1 1v10l6-5z" fill="#ffffff"/></svg>
<div class="ui" style="left:593px;top:731px;font-size:12px;color:#ffffff;letter-spacing:-0.6px">Run</div>
<div class="ui" style="left:1323px;top:731px;font-size:12px;color:#ffffff;letter-spacing:-0.25px">Ln 23, Col 71</div>
<div class="ui" style="left:1407px;top:731px;font-size:12px;color:#ffffff;letter-spacing:-0.35px">Spaces: 4</div>
<div class="ui" style="left:1472px;top:731px;font-size:12px;color:#ffffff;letter-spacing:-0.5px">UTF-8</div>
<div class="ui" style="left:1519px;top:731px;font-size:12px;color:#ffffff;letter-spacing:-1.45px">CRLF</div>
<div class="ui" style="left:1561px;top:731px;font-size:12px;color:#ffffff;letter-spacing:-1.9px">XSL</div>
<svg class="a" style="left:1597px;top:729px" width="13" height="14" viewBox="0 0 13 14" fill="none" stroke="#ffffff" stroke-width="1.1"><circle cx="6.5" cy="6" r="1.5"/><path d="M3.5 9.5a4.2 4.2 0 1 1 6 0M2 11.5a6.3 6.3 0 1 1 9 0M6.5 7.5V14"/></svg>
<div class="ui" style="left:1613px;top:731px;font-size:12px;color:#ffffff;letter-spacing:-0.15px">Go Live</div>
<svg class="a" style="left:1669px;top:728px" width="15" height="15" viewBox="0 0 15 15" fill="none" stroke="#ffffff" stroke-width="1.2" stroke-linejoin="round"><path d="M12.21 6.56 L14.04 6.60 L14.04 8.40 L12.21 8.44 L11.49 10.17 L12.76 11.48 L11.48 12.76 L10.17 11.49 L8.44 12.21 L8.40 14.04 L6.60 14.04 L6.56 12.21 L4.83 11.49 L3.52 12.76 L2.24 11.48 L3.51 10.17 L2.79 8.44 L0.96 8.40 L0.96 6.60 L2.79 6.56 L3.51 4.83 L2.24 3.52 L3.52 2.24 L4.83 3.51 L6.56 2.79 L6.60 0.96 L8.40 0.96 L8.44 2.79 L10.17 3.51 L11.48 2.24 L12.76 3.52 L11.49 4.83Z"/><circle cx="7.5" cy="7.5" r="1.8"/></svg>
<div class="ui" style="left:1686px;top:731px;font-size:12px;color:#ffffff">Spell</div>
<svg class="a" style="left:1727px;top:729px" width="16" height="14" viewBox="0 0 16 14" fill="none" stroke="#ffffff" stroke-width="1.1"><circle cx="5" cy="4.5" r="2.8"/><path d="M0.5 13c0-3 2-5 4.5-5s4.5 2 4.5 5M8 1h7v6h-3l-2 2"/></svg>
<svg class="a" style="left:1757px;top:729px" width="15" height="14" viewBox="0 0 15 14" fill="none" stroke="#ffffff" stroke-width="1.1"><path d="M2 11h10l-1.5-2V6a3.5 3.5 0 0 0-7 0v3z M5.5 12.5h3"/><circle cx="11.5" cy="3" r="2.5" fill="#ffffff" stroke="none"/></svg>
<svg class="a" style="left:0;top:0" width="1787" height="747" viewBox="0 0 1787 747">
<path d="M172 414.6 L269 410.3 L272 405.5 L298.5 416.6 L271.6 428.2 L269 422.7 L172 418.6 Z" fill="#f20c0c"/>
<circle cx="164" cy="418" r="13.3" fill="#c80f12" stroke="#e42125" stroke-width="1.6"/>
<path d="M288 623.8 L178 623.4 L179.7 617.6 L153.2 630.5 L180.2 641.2 L178.3 635.6 L288 627.4 Z" fill="#f20c0c"/>
<circle cx="295.3" cy="625.7" r="13.3" fill="#c80f12" stroke="#e42125" stroke-width="1.6"/>
</svg>
<div class="ui" style="left:159.5px;top:410.5px;font-size:15px;color:#ffffff">1</div>
<div class="ui" style="left:290.5px;top:619px;font-size:15px;color:#ffffff">2</div>
</body></html>
